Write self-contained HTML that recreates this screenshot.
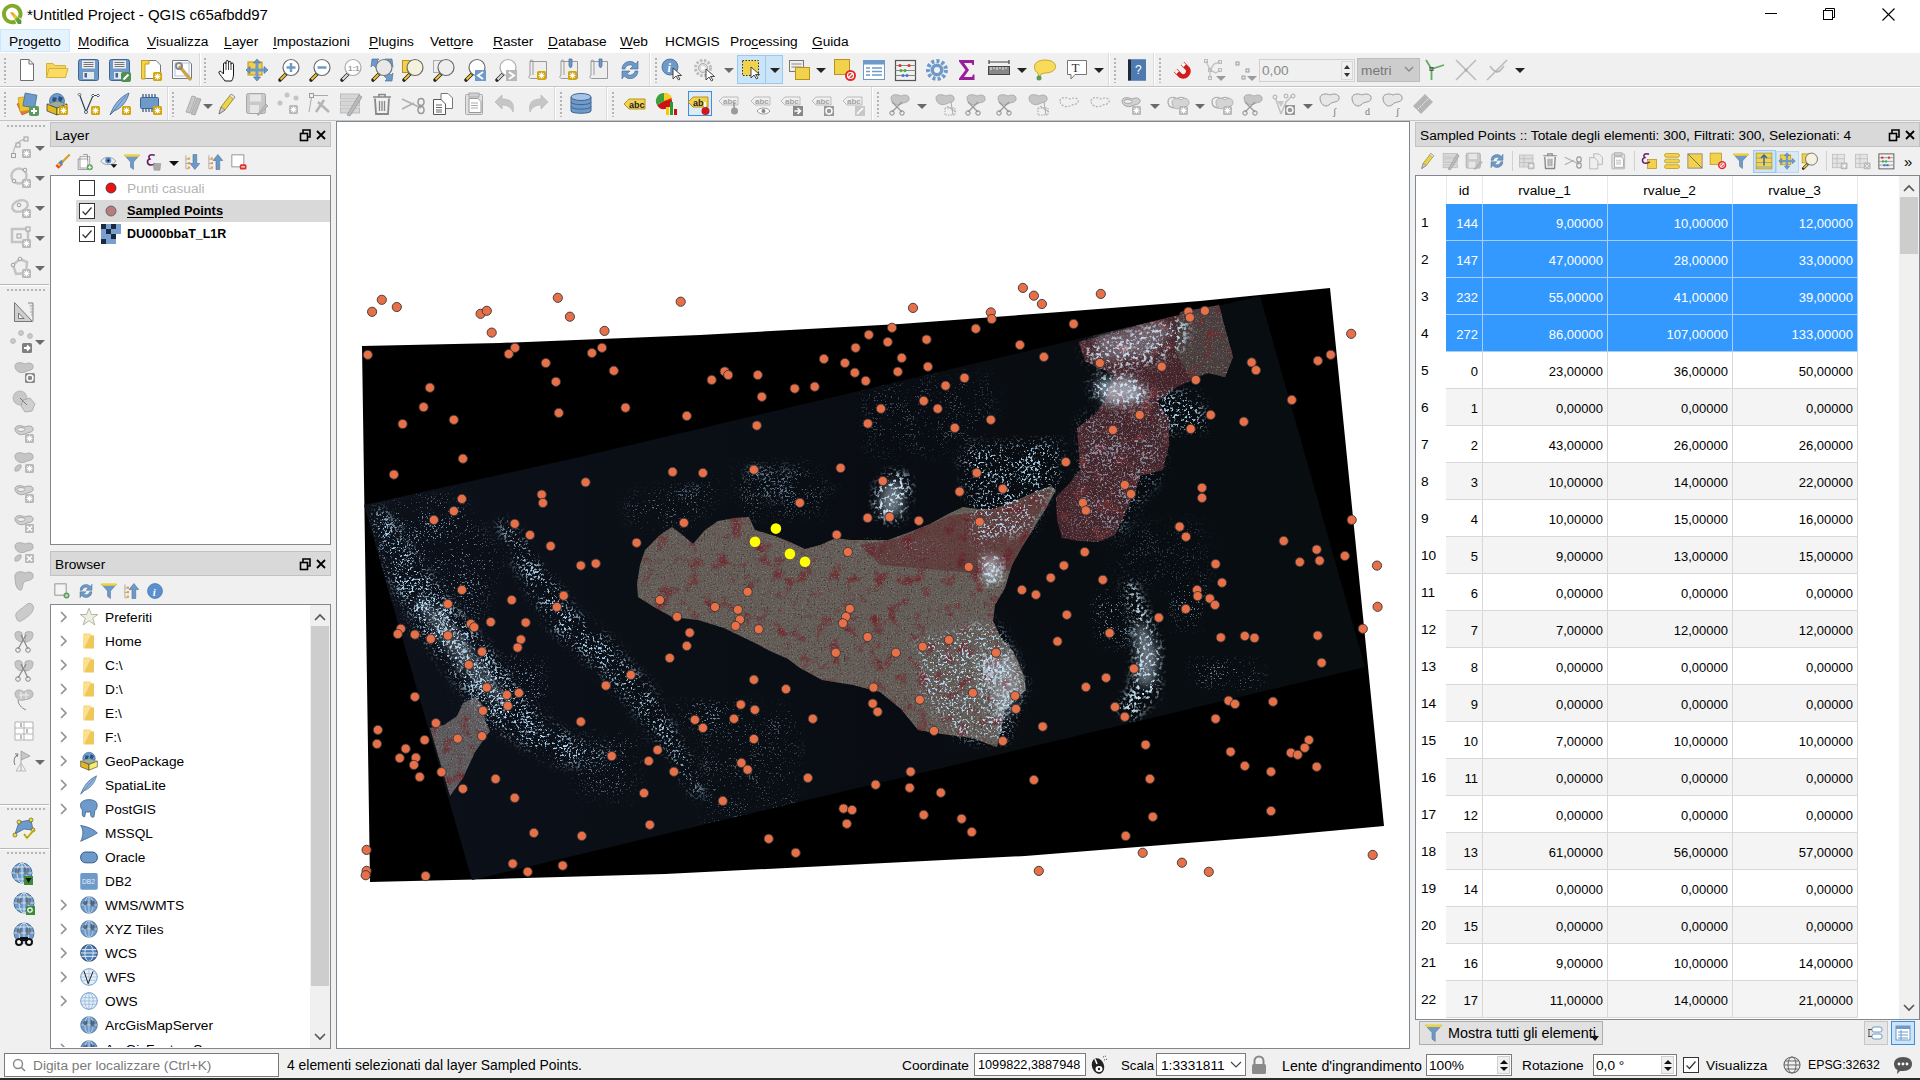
<!DOCTYPE html><html><head><meta charset="utf-8"><title>QGIS</title><style>
*{box-sizing:border-box;margin:0;padding:0}
html,body{width:1920px;height:1080px;overflow:hidden;background:#f0f0f0;font-family:"Liberation Sans", sans-serif;font-size:13.7px;color:#000;position:relative}
.a{position:absolute}
.t{position:absolute;white-space:pre;line-height:1}
u{text-decoration:underline;text-underline-offset:1.5px;text-decoration-thickness:1px}
svg{position:absolute;overflow:visible}
.hd{position:absolute;width:2px;background:repeating-linear-gradient(to bottom,#b4b4b4 0,#b4b4b4 2px,transparent 2px,transparent 4px)}
.hh{position:absolute;height:2px;background:repeating-linear-gradient(to right,#b4b4b4 0,#b4b4b4 2px,transparent 2px,transparent 4px)}
.dd{position:absolute;width:0;height:0;border-left:5px solid transparent;border-right:5px solid transparent;border-top:5px solid #222}
.ddg{position:absolute;width:0;height:0;border-left:5px solid transparent;border-right:5px solid transparent;border-top:5px solid #6a6a6a}
</style></head><body>
<div class="a" style="left:0;top:0;width:1920px;height:30px;background:#fff"></div>
<svg style="left:0px;top:1px" width="26" height="26" viewBox="0 0 26 26"><defs><linearGradient id="qg" x1="0" y1="0" x2="1" y2="1"><stop offset="0" stop-color="#f08a1c"/><stop offset="0.45" stop-color="#e8d03a"/><stop offset="0.6" stop-color="#6aa53a"/><stop offset="1" stop-color="#4f9235"/></linearGradient></defs><path d="M15.5 20.6A8.3 8.3 0 1 1 19.6 16.8" fill="none" stroke="#82a92a" stroke-width="3.9"/><path d="M10 11.5L13 11.2L21.5 19.6L21.2 23L18 23Z" fill="url(#qg)"/></svg>
<div class="t" style="left:27px;top:7px;font-size:15px">*Untitled Project - QGIS c65afbdd97</div>
<div class="a" style="left:1765px;top:13px;width:12px;height:1px;background:#000"></div>
<svg style="left:1823px;top:8px" width="14" height="14" viewBox="0 0 14 14"><rect x="0.5" y="2.5" width="9" height="9" fill="none" stroke="#000"/><path d="M2.5 2.5V0.5H11.5V9.5H9.5" fill="none" stroke="#000"/></svg>
<svg style="left:1882px;top:8px" width="13" height="13" viewBox="0 0 13 13"><path d="M0.5 0.5L12.5 12.5M12.5 0.5L0.5 12.5" stroke="#000" stroke-width="1.1"/></svg>
<div class="a" style="left:0;top:30px;width:1920px;height:23px;background:#fff"></div>
<div class="a" style="left:0;top:29px;width:70px;height:23px;background:#e5f3ff;border:1px solid #cce8ff"></div>
<div class="t" style="left:9px;top:34.5px;font-size:13.7px">P<u>r</u>ogetto</div>
<div class="t" style="left:78px;top:34.5px;font-size:13.7px"><u>M</u>odifica</div>
<div class="t" style="left:147px;top:34.5px;font-size:13.7px"><u>V</u>isualizza</div>
<div class="t" style="left:224px;top:34.5px;font-size:13.7px"><u>L</u>ayer</div>
<div class="t" style="left:273px;top:34.5px;font-size:13.7px"><u>I</u>mpostazioni</div>
<div class="t" style="left:369px;top:34.5px;font-size:13.7px"><u>P</u>lugins</div>
<div class="t" style="left:430px;top:34.5px;font-size:13.7px">Vett<u>o</u>re</div>
<div class="t" style="left:493px;top:34.5px;font-size:13.7px"><u>R</u>aster</div>
<div class="t" style="left:548px;top:34.5px;font-size:13.7px"><u>D</u>atabase</div>
<div class="t" style="left:620px;top:34.5px;font-size:13.7px"><u>W</u>eb</div>
<div class="t" style="left:665px;top:34.5px;font-size:13.7px">HCMGIS</div>
<div class="t" style="left:730px;top:34.5px;font-size:13.7px">Pro<u>c</u>essing</div>
<div class="t" style="left:812px;top:34.5px;font-size:13.7px"><u>G</u>uida</div>
<div class="a" style="left:0;top:52px;width:1920px;height:1px;background:#fff"></div>
<div class="a" style="left:0;top:53px;width:1920px;height:33px;background:#f0f0f0"></div>
<div class="a" style="left:0;top:86px;width:1920px;height:1px;background:#c4c4c4"></div>
<div class="a" style="left:0;top:87px;width:1920px;height:1px;background:#fff"></div>
<div class="a" style="left:0;top:120px;width:1920px;height:1px;background:#c4c4c4"></div>
<div class="hd" style="left:4px;top:58px;height:25px"></div>
<div class="hd" style="left:204px;top:58px;height:25px"></div>
<div class="hd" style="left:655px;top:58px;height:25px"></div>
<div class="hd" style="left:1114px;top:58px;height:25px"></div>
<div class="hd" style="left:1159px;top:58px;height:25px"></div>
<div class="hd" style="left:4px;top:92px;height:25px"></div>
<div class="hd" style="left:172px;top:92px;height:25px"></div>
<div class="hd" style="left:560px;top:92px;height:25px"></div>
<div class="hd" style="left:612px;top:92px;height:25px"></div>
<div class="hd" style="left:877px;top:92px;height:25px"></div>
<div class="a" style="left:199px;top:53px;width:1px;height:33px;background:#dadada"></div>
<div class="a" style="left:200px;top:53px;width:1px;height:33px;background:#fff"></div>
<div class="a" style="left:649px;top:53px;width:1px;height:33px;background:#dadada"></div>
<div class="a" style="left:650px;top:53px;width:1px;height:33px;background:#fff"></div>
<div class="a" style="left:1108px;top:53px;width:1px;height:33px;background:#dadada"></div>
<div class="a" style="left:1109px;top:53px;width:1px;height:33px;background:#fff"></div>
<div class="a" style="left:1153px;top:53px;width:1px;height:33px;background:#dadada"></div>
<div class="a" style="left:1154px;top:53px;width:1px;height:33px;background:#fff"></div>
<div class="a" style="left:167px;top:87px;width:1px;height:33px;background:#dadada"></div>
<div class="a" style="left:168px;top:87px;width:1px;height:33px;background:#fff"></div>
<div class="a" style="left:554px;top:87px;width:1px;height:33px;background:#dadada"></div>
<div class="a" style="left:555px;top:87px;width:1px;height:33px;background:#fff"></div>
<div class="a" style="left:606px;top:87px;width:1px;height:33px;background:#dadada"></div>
<div class="a" style="left:607px;top:87px;width:1px;height:33px;background:#fff"></div>
<div class="a" style="left:871px;top:87px;width:1px;height:33px;background:#dadada"></div>
<div class="a" style="left:872px;top:87px;width:1px;height:33px;background:#fff"></div>
<div class="a" style="left:737px;top:55px;width:46px;height:29px;background:#cce4f7;border:1px solid #99c9ef"></div>
<div class="a" style="left:765px;top:56px;width:1px;height:27px;background:#99c9ef"></div>
<svg style="left:15px;top:58px" width="24" height="24" viewBox="0 0 24 24"><path d="M5.5 1.5H14L18.5 6V22.5H5.5Z" fill="#fff" stroke="#6e6e6e"/><path d="M14 1.5V6H18.5" fill="none" stroke="#6e6e6e"/></svg>
<svg style="left:45px;top:58px" width="24" height="24" viewBox="0 0 24 24"><path d="M1.5 5.5H8L10 7.5H20.5V19.5H1.5Z" fill="#f6d35a" stroke="#d6b13a"/><path d="M4 10.5H23L20.5 19.5H1.5Z" fill="#fbdb62" stroke="#d6b13a"/></svg>
<svg style="left:77px;top:58px" width="24" height="24" viewBox="0 0 24 24"><rect x="1.5" y="1.5" width="20" height="21" rx="2" fill="#6d9ac9" stroke="#3f6693"/><rect x="5" y="2.5" width="13" height="8" fill="#eee"/><path d="M6.5 4.5H16.5M6.5 6.5H16.5M6.5 8.5H16.5" stroke="#555" stroke-width="0.8"/><rect x="6" y="14" width="11" height="7" fill="#e8e8e8"/><rect x="7.5" y="15" width="2.5" height="4.5" fill="#3f6693"/></svg>
<svg style="left:108px;top:58px" width="24" height="24" viewBox="0 0 24 24"><rect x="1.5" y="1.5" width="20" height="21" rx="2" fill="#6d9ac9" stroke="#3f6693"/><rect x="5" y="2.5" width="13" height="8" fill="#eee"/><path d="M6.5 4.5H16.5M6.5 6.5H16.5M6.5 8.5H16.5" stroke="#555" stroke-width="0.8"/><rect x="6" y="14" width="11" height="7" fill="#e8e8e8"/><rect x="7.5" y="15" width="2.5" height="4.5" fill="#3f6693"/><rect x="13" y="14" width="10" height="10" rx="2" fill="#4f8f52"/><path d="M15.5 21.5L20.5 16.5" stroke="#fff" stroke-width="2"/></svg>
<svg style="left:139px;top:58px" width="24" height="24" viewBox="0 0 24 24"><path d="M2.5 2.5H17L21.5 7V20.5H2.5Z" fill="#fff" stroke="#777"/><path d="M2.5 2.5H10V6H6V21H2.5Z" fill="#f3d250" stroke="#c49f18"/><rect x="14" y="14" width="9" height="9" rx="1.5" fill="#d4a60c"/><path d="M18.5 15.5V21.5M15.5 18.5H21.5M16.3 16.3L20.7 20.7M20.7 16.3L16.3 20.7" stroke="#fff" stroke-width="1.1"/></svg>
<svg style="left:170px;top:58px" width="24" height="24" viewBox="0 0 24 24"><path d="M2.5 2.5H18L21.5 6V20.5H2.5Z" fill="#fff" stroke="#777"/><rect x="5" y="5" width="14" height="13" fill="none" stroke="#aac0f0"/><path d="M10 9L20 21" stroke="#c9a54a" stroke-width="3.5" stroke-linecap="round"/><circle cx="9" cy="8" r="3" fill="none" stroke="#888" stroke-width="2"/></svg>
<svg style="left:215px;top:58px" width="24" height="24" viewBox="0 0 24 24"><g transform="translate(2 0)"><path d="M8 23C6 20 3 17 2 15C1.4 13.6 3 12.6 4.2 13.6L6.5 16V6C6.5 4.3 9 4.3 9 6V3.8C9 2 11.5 2 11.5 3.8V4.8C11.5 3 14 3 14 4.8V6.3C14 4.6 16.5 4.6 16.5 6.3V16C16.5 19.5 15.5 21.5 14.5 23Z" fill="#fff" stroke="#111" stroke-width="1"/><path d="M9 6V12M11.5 4.8V12M14 6.3V12" stroke="#111" stroke-width="0.8"/></g></svg>
<svg style="left:245px;top:58px" width="24" height="24" viewBox="0 0 24 24"><rect x="3" y="4" width="14" height="13" fill="#f2d24d" stroke="#b59418"/><path d="M12 1L15.5 5H8.5ZM12 23L15.5 19H8.5ZM1 12L5 8.5V15.5ZM23 12L19 8.5V15.5Z" fill="#6d9ac9" stroke="#3f6693" stroke-width="0.6"/><path d="M12 5V19M5 12H19" stroke="#6d9ac9" stroke-width="3"/></svg>
<svg style="left:277px;top:58px" width="24" height="24" viewBox="0 0 24 24"><path d="M3 22L9 16" stroke="#222" stroke-width="3.6" stroke-linecap="round"/><path d="M3.5 21.5L8.5 16.5" stroke="#e9c22e" stroke-width="2.2"/><circle cx="14" cy="9.5" r="8" fill="#fff" stroke="#6b6b6b" stroke-width="1.2"/><path d="M14 5V14M9.5 9.5H18.5" stroke="#6d9ac9" stroke-width="2.5"/></svg>
<svg style="left:308px;top:58px" width="24" height="24" viewBox="0 0 24 24"><path d="M3 22L9 16" stroke="#222" stroke-width="3.6" stroke-linecap="round"/><path d="M3.5 21.5L8.5 16.5" stroke="#e9c22e" stroke-width="2.2"/><circle cx="14" cy="9.5" r="8" fill="#fff" stroke="#6b6b6b" stroke-width="1.2"/><path d="M9.5 9.5H18.5" stroke="#6d9ac9" stroke-width="2.5"/></svg>
<svg style="left:339px;top:58px" width="24" height="24" viewBox="0 0 24 24"><path d="M3 22L9 16" stroke="#222" stroke-width="3.6" stroke-linecap="round"/><path d="M3.5 21.5L8.5 16.5" stroke="#ddd" stroke-width="2.2"/><circle cx="14" cy="9.5" r="8" fill="#fff" stroke="#aaa" stroke-width="1.2"/><text x="9" y="12.5" font-size="8" font-weight="bold" fill="#999" font-family="Liberation Sans">1:1</text></svg>
<svg style="left:370px;top:58px" width="24" height="24" viewBox="0 0 24 24"><path d="M2 1H9L7 3L10 6L6 10L3 7L1 9Z M22 1H15L17 3L14 6L18 10L21 7L23 9Z M22 23H15L17 21L14 18L18 14L21 17L23 15Z" fill="#6d9ac9" stroke="#3f6693" stroke-width="0.6"/><path d="M3 22L9 16" stroke="#222" stroke-width="3.6" stroke-linecap="round"/><path d="M3.5 21.5L8.5 16.5" stroke="#e9c22e" stroke-width="2.2"/><circle cx="14" cy="9.5" r="8" fill="#e8e8e8" stroke="#777" stroke-width="1.2"/></svg>
<svg style="left:401px;top:58px" width="24" height="24" viewBox="0 0 24 24"><rect x="1.5" y="2.5" width="10" height="12" fill="#f2d24d" stroke="#b59418"/><path d="M3 22L9 16" stroke="#222" stroke-width="3.6" stroke-linecap="round"/><path d="M3.5 21.5L8.5 16.5" stroke="#e9c22e" stroke-width="2.2"/><circle cx="14" cy="9.5" r="8" fill="#f4f1dd" stroke="#6b6b6b" stroke-width="1.2"/></svg>
<svg style="left:432px;top:58px" width="24" height="24" viewBox="0 0 24 24"><rect x="1.5" y="2.5" width="10" height="12" fill="#eee" stroke="#aaa"/><path d="M3 22L9 16" stroke="#222" stroke-width="3.6" stroke-linecap="round"/><path d="M3.5 21.5L8.5 16.5" stroke="#e9c22e" stroke-width="2.2"/><circle cx="14" cy="9.5" r="8" fill="#eee" stroke="#6b6b6b" stroke-width="1.2"/></svg>
<svg style="left:463px;top:58px" width="24" height="24" viewBox="0 0 24 24"><path d="M3 22L9 16" stroke="#222" stroke-width="3.6" stroke-linecap="round"/><path d="M3.5 21.5L8.5 16.5" stroke="#e9c22e" stroke-width="2.2"/><circle cx="14" cy="9.5" r="8" fill="#fff" stroke="#6b6b6b" stroke-width="1.2"/><rect x="12" y="12" width="11" height="11" fill="#6d9ac9"/><path d="M20 14L15 17.5L20 21" fill="none" stroke="#fff" stroke-width="2"/></svg>
<svg style="left:494px;top:58px" width="24" height="24" viewBox="0 0 24 24"><path d="M3 22L9 16" stroke="#222" stroke-width="3.6" stroke-linecap="round"/><path d="M3.5 21.5L8.5 16.5" stroke="#ddd" stroke-width="2.2"/><circle cx="14" cy="9.5" r="8" fill="#fff" stroke="#aaa" stroke-width="1.2"/><rect x="12" y="12" width="11" height="11" fill="#b8b8b8"/><path d="M15 14L20 17.5L15 21" fill="none" stroke="#fff" stroke-width="2"/></svg>
<svg style="left:526px;top:58px" width="24" height="24" viewBox="0 0 24 24"><path d="M4 3.5H20.5V20.5H4.5C2.5 20.5 2.5 17.5 4 17.5V3.5C4 1.5 7 1.5 7 3.5V17" fill="#eee" stroke="#999"/><rect x="11" y="13" width="9" height="9" rx="1.5" fill="#d4a60c"/><path d="M15.5 14.5V20.5M12.5 17.5H18.5M13.3 15.3L17.7 19.7M17.7 15.3L13.3 19.7" stroke="#fff" stroke-width="1.1"/></svg>
<svg style="left:557px;top:58px" width="24" height="24" viewBox="0 0 24 24"><path d="M4 3.5H20.5V20.5H4.5C2.5 20.5 2.5 17.5 4 17.5V3.5C4 1.5 7 1.5 7 3.5V17" fill="#eee" stroke="#999"/><path d="M12 1H15V8L13.5 10L12 8Z" fill="#6d9ac9" stroke="#3f6693" stroke-width="0.7"/><rect x="11" y="13" width="9" height="9" rx="1.5" fill="#d4a60c"/><path d="M15.5 14.5V20.5M12.5 17.5H18.5M13.3 15.3L17.7 19.7M17.7 15.3L13.3 19.7" stroke="#fff" stroke-width="1.1"/></svg>
<svg style="left:587px;top:58px" width="24" height="24" viewBox="0 0 24 24"><path d="M4 3.5H20.5V20.5H4.5C2.5 20.5 2.5 17.5 4 17.5V3.5C4 1.5 7 1.5 7 3.5V17" fill="#eee" stroke="#999"/><path d="M12 1H15V8L13.5 10L12 8Z" fill="#6d9ac9" stroke="#3f6693" stroke-width="0.7"/></svg>
<svg style="left:618px;top:58px" width="24" height="24" viewBox="0 0 24 24"><path d="M4 11A8 8 0 0 1 18 6L20 3V11H12L15 8A5 5 0 0 0 7 11Z" fill="#6d9ac9" stroke="#3f6693" stroke-width="0.6"/><path d="M20 13A8 8 0 0 1 6 18L4 21V13H12L9 16A5 5 0 0 0 17 13Z" fill="#6d9ac9" stroke="#3f6693" stroke-width="0.6"/></svg>
<svg style="left:661px;top:58px" width="24" height="24" viewBox="0 0 24 24"><circle cx="9" cy="9" r="8" fill="#6d9ac9" stroke="#3f6693" stroke-width="0.8"/><text x="6.5" y="14" font-size="12" font-style="italic" font-weight="bold" fill="#fff" font-family="Liberation Serif">i</text><path d="M12 10L12 21L15 18L17.5 22L19 21L16.5 17.5H20.5Z" fill="#fff" stroke="#333" stroke-width="0.9"/></svg>
<svg style="left:693px;top:58px" width="24" height="24" viewBox="0 0 24 24"><circle cx="10" cy="10" r="7.5" fill="none" stroke="#bdbdbd" stroke-width="3" stroke-dasharray="2.5 1.5"/><circle cx="10" cy="10" r="4.5" fill="#ddd" stroke="#aaa"/><path d="M8.5 7.5L13 10L8.5 12.5Z" fill="#fff"/><path d="M13 11L13 22L16 19L18.5 23L20 22L17.5 18.5H21.5Z" fill="#fff" stroke="#333" stroke-width="0.9"/></svg>
<svg style="left:740px;top:58px" width="24" height="24" viewBox="0 0 24 24"><rect x="2.5" y="2.5" width="16" height="15" fill="#f2d24d" stroke="#333" stroke-dasharray="1.5 1.5"/><path d="M11 9L11 20L14 17L16.5 21L18 20L15.5 16.5H19.5Z" fill="#fff" stroke="#333" stroke-width="0.9"/></svg>
<svg style="left:788px;top:58px" width="24" height="24" viewBox="0 0 24 24"><rect x="1.5" y="2.5" width="14" height="11" fill="#eee" stroke="#777"/><path d="M3.5 6H13.5M3.5 9H13.5" stroke="#888"/><rect x="7.5" y="9.5" width="14" height="12" fill="#f2d24d" stroke="#b59418"/></svg>
<svg style="left:833px;top:58px" width="24" height="24" viewBox="0 0 24 24"><rect x="1.5" y="1.5" width="15" height="15" fill="#f2d24d" stroke="#b59418"/><circle cx="17.5" cy="17.5" r="5.5" fill="#e02a2a"/><path d="M15 20L20 15" stroke="#fff" stroke-width="1.5"/><circle cx="17.5" cy="17.5" r="3" fill="none" stroke="#fff" stroke-width="1.2"/></svg>
<svg style="left:862px;top:58px" width="24" height="24" viewBox="0 0 24 24"><rect x="1.5" y="2.5" width="21" height="19" fill="#fff" stroke="#6d9ac9"/><rect x="1.5" y="2.5" width="21" height="4" fill="#6d9ac9"/><path d="M4 10H8M10 10H20M4 13.5H8M10 13.5H20M4 17H8M10 17H20" stroke="#6d9ac9" stroke-width="1.5"/></svg>
<svg style="left:893px;top:58px" width="24" height="24" viewBox="0 0 24 24"><rect x="2.5" y="2.5" width="20" height="20" fill="none" stroke="#555" stroke-width="1.2"/><path d="M2.5 7.5H22.5M2.5 12.5H22.5M2.5 17.5H22.5" stroke="#888"/><circle cx="7" cy="7.5" r="1.6" fill="#d33"/><circle cx="16" cy="7.5" r="1.6" fill="#d33"/><circle cx="8" cy="12.5" r="1.6" fill="#4a4"/><circle cx="12" cy="12.5" r="1.6" fill="#4a4"/><circle cx="10" cy="17.5" r="1.6" fill="#47c"/><circle cx="14" cy="17.5" r="1.6" fill="#47c"/></svg>
<svg style="left:925px;top:58px" width="24" height="24" viewBox="0 0 24 24"><circle cx="12" cy="12" r="9" fill="none" stroke="#6d9ac9" stroke-width="4" stroke-dasharray="3 2.2"/><circle cx="12" cy="12" r="6.5" fill="#6d9ac9"/><circle cx="12" cy="12" r="3" fill="#f0f0f0"/></svg>
<svg style="left:955px;top:58px" width="24" height="24" viewBox="0 0 24 24"><path d="M4 2H19V7H17.5L16.5 5H9L14 12L9 19H17L18 16.5H19.5V22H4V20.5L10.5 12L4 3.5Z" fill="#9a1e9a"/></svg>
<svg style="left:987px;top:58px" width="24" height="24" viewBox="0 0 24 24"><rect x="1.5" y="8.5" width="21" height="8" fill="#888" stroke="#444"/><path d="M4 9V12M7 9V11M10 9V12M13 9V11M16 9V12M19 9V11" stroke="#eee"/><path d="M2 4H22M2 2V6M22 2V6" stroke="#444" stroke-width="1.2"/></svg>
<svg style="left:1033px;top:58px" width="24" height="24" viewBox="0 0 24 24"><path d="M12 2C18 2 22.5 4.5 22.5 8.5C22.5 12.5 18 15 12 15L8 16L6 21L5 15C2.5 14 1.5 11.5 1.5 8.5C1.5 4.5 6 2 12 2Z" fill="#f7dc5c" stroke="#c8a828"/><circle cx="6" cy="20" r="2.5" fill="#5a9a5a"/></svg>
<svg style="left:1065px;top:58px" width="24" height="24" viewBox="0 0 24 24"><path d="M2.5 2.5H21.5V16.5H10L6 21V16.5H2.5Z" fill="#fff" stroke="#777"/><text x="6.5" y="14" font-size="13" font-family="Liberation Serif" fill="#333">T</text></svg>
<svg style="left:1125px;top:58px" width="24" height="24" viewBox="0 0 24 24"><rect x="3" y="1.5" width="18" height="21" fill="#3f6693"/><rect x="6" y="1.5" width="15" height="21" fill="#4e7ab0"/><rect x="3" y="1.5" width="3" height="21" fill="#1e2a3a"/><text x="10" y="16" font-size="12" fill="#fff" font-family="Liberation Sans">?</text></svg>
<svg style="left:1170px;top:58px" width="24" height="24" viewBox="0 0 24 24"><path d="M12.6 5.6L17.8 10.8A5.2 5.2 0 0 1 10.8 17.8L5.6 12.6" fill="none" stroke="#d41c1c" stroke-width="4.6"/><path d="M12.6 5.6L14.7 7.7M5.6 12.6L7.7 14.7" stroke="#fff" stroke-width="3.4"/><path d="M11 4L16.2 9.2M14.2 2L19.4 7.2" stroke="#8a1010" stroke-width="0" /></svg>
<svg style="left:1202px;top:58px" width="24" height="24" viewBox="0 0 24 24"><path d="M4 3L8 12L8 20M8 12L12 6M8 12L14 15M12 6L18 4M14 15L18 12" stroke="#c4c4c4" stroke-width="1.4" fill="none"/><rect x="2.5" y="1.5" width="3" height="3" fill="none" stroke="#bbb"/><rect x="16.5" y="2.5" width="3" height="3" fill="none" stroke="#bbb"/><rect x="16.5" y="10.5" width="3" height="3" fill="none" stroke="#bbb"/><rect x="6.5" y="10.5" width="3" height="3" fill="none" stroke="#bbb"/><rect x="6.5" y="18.5" width="3" height="3" fill="none" stroke="#bbb"/></svg>
<svg style="left:1233px;top:58px" width="24" height="24" viewBox="0 0 24 24"><rect x="3" y="4" width="3" height="3" fill="none" stroke="#999"/><rect x="13" y="11" width="3" height="3" fill="none" stroke="#999"/><rect x="9" y="18" width="3" height="3" fill="none" stroke="#999"/></svg>
<svg style="left:1422px;top:58px" width="24" height="24" viewBox="0 0 24 24"><path d="M4 2L9.5 11V22M9.5 11L22 7" stroke="#5fae5f" stroke-width="1.8" fill="none"/><rect x="8" y="9.5" width="3" height="3" fill="none" stroke="#555"/></svg>
<svg style="left:1454px;top:58px" width="24" height="24" viewBox="0 0 24 24"><path d="M2 2L22 22M22 2L2 22" stroke="#bcbcbc" stroke-width="1.6"/><circle cx="12" cy="12" r="1.5" fill="#aaa"/></svg>
<svg style="left:1485px;top:58px" width="24" height="24" viewBox="0 0 24 24"><path d="M2 22L22 2" stroke="#bcbcbc" stroke-width="1.6"/><path d="M5 10L12 13L19 10L12 15Z" fill="#b0b0b0"/><path d="M5 8L10 14M19 8L14 14" stroke="#bcbcbc" stroke-width="1.6"/></svg>
<div class="dd" style="left:770px;top:68px"></div>
<div class="dd" style="left:816px;top:68px"></div>
<div class="dd" style="left:1017px;top:68px"></div>
<div class="dd" style="left:1094px;top:68px"></div>
<div class="dd" style="left:1515px;top:68px"></div>
<div class="ddg" style="left:724px;top:68px"></div>
<div class="ddg" style="left:1216px;top:76px;border-top-color:#9a9a9a"></div>
<div class="ddg" style="left:1247px;top:76px;border-top-color:#9a9a9a"></div>
<div class="a" style="left:1259px;top:59px;width:96px;height:23px;background:#f0f0f0;border:1px solid #d0d0d0"></div>
<div class="t" style="left:1262px;top:64px;color:#8a8a8a;font-size:13.7px">0,00</div>
<div class="a" style="left:1341px;top:61px;width:12px;height:19px;border:1px solid #d8d8d8;background:#f0f0f0"></div>
<svg style="left:1342px;top:62px" width="10" height="18" viewBox="0 0 10 18"><path d="M2 7L5 3L8 7Z M2 11L5 15L8 11Z" fill="#333"/></svg>
<div class="a" style="left:1357px;top:58px;width:63px;height:24px;background:#cdcdcd;border:1px solid #bcbcbc"></div>
<div class="t" style="left:1361px;top:64px;color:#777;font-size:13.7px">metri</div>
<svg style="left:1404px;top:66px" width="10" height="8" viewBox="0 0 10 8"><path d="M1 1L5 5L9 1" fill="none" stroke="#888" stroke-width="1.3"/></svg>
<div class="a" style="left:688px;top:91px;width:24px;height:25px;background:#dfeaf7;border:1px solid #3a8ee6"></div>
<svg style="left:15px;top:92px" width="24" height="24" viewBox="0 0 24 24"><path d="M2 12L9 8L14 20L7 23Z" fill="#e07a3a" stroke="#b05020" stroke-width="0.6"/><rect x="4" y="5" width="11" height="14" fill="#f2c42c" stroke="#c09010" stroke-width="0.6" transform="rotate(-8 9 12)"/><rect x="9" y="2" width="12" height="13" fill="#6d9ac9" stroke="#3f6693" stroke-width="0.7" transform="rotate(10 15 8)"/><rect x="14" y="14" width="10" height="10" rx="2" fill="#5a9a5a"/><path d="M19 16V22M16 19H22" stroke="#fff" stroke-width="2"/></svg>
<svg style="left:45px;top:92px" width="24" height="24" viewBox="0 0 24 24"><circle cx="12" cy="9" r="7.5" fill="#6d9ac9" stroke="#3f6693" stroke-width="0.7"/><path d="M8 5L12 6L10 10L7 9Z M14 4L18 6L16 10L13 8Z" fill="#2d4f78"/><path d="M2 12L12 16V23L2 19Z" fill="#e2b81e" stroke="#333" stroke-width="0.7"/><path d="M12 16L22 12V19L12 23Z" fill="#f8ec70" stroke="#333" stroke-width="0.7"/><path d="M2 12L12 9L22 12L12 16Z" fill="#f3d84a" stroke="#333" stroke-width="0.7" opacity="0.35"/><rect x="14" y="14" width="9" height="9" rx="1.5" fill="#d4a60c"/><path d="M18.5 15.5V21.5M15.5 18.5H21.5M16.3 16.3L20.7 20.7M20.7 16.3L16.3 20.7" stroke="#fff" stroke-width="1.1"/></svg>
<svg style="left:77px;top:92px" width="24" height="24" viewBox="0 0 24 24"><path d="M2.5 2.5L9 20L16 3.5L21 3.5" fill="none" stroke="#2d3f55" stroke-width="1.2"/><path d="M1 2.5L2.5 1L4 2.5L2.5 4Z M14.5 3.5L16 2L17.5 3.5L16 5Z M19.5 3.5L21 2L22.5 3.5L21 5Z" fill="#fff" stroke="#2d3f55" stroke-width="0.8"/><circle cx="9" cy="20" r="1.5" fill="#fff" stroke="#2d3f55" stroke-width="0.8"/><rect x="14" y="14" width="9" height="9" rx="1.5" fill="#d4a60c"/><path d="M18.5 15.5V21.5M15.5 18.5H21.5M16.3 16.3L20.7 20.7M20.7 16.3L16.3 20.7" stroke="#fff" stroke-width="1.1"/></svg>
<svg style="left:108px;top:92px" width="24" height="24" viewBox="0 0 24 24"><path d="M2 23C5 15 10 6 21 1C19 9 14 16 6 19Z" fill="#8fb3dc" stroke="#3f6693" stroke-width="0.8"/><path d="M3 22L18 4" stroke="#3f6693" stroke-width="0.6"/><rect x="14" y="14" width="9" height="9" rx="1.5" fill="#d4a60c"/><path d="M18.5 15.5V21.5M15.5 18.5H21.5M16.3 16.3L20.7 20.7M20.7 16.3L16.3 20.7" stroke="#fff" stroke-width="1.1"/></svg>
<svg style="left:139px;top:92px" width="24" height="24" viewBox="0 0 24 24"><rect x="1.5" y="5.5" width="18" height="11" rx="1" fill="#6d9ac9" stroke="#3f6693"/><path d="M4 2V5M7 2V5M10 2V5M13 2V5M16 2V5M4 17V20M7 17V20M10 17V20M13 17V20M16 17V20" stroke="#2d4f78" stroke-width="1.2"/><rect x="14" y="14" width="9" height="9" rx="1.5" fill="#d4a60c"/><path d="M18.5 15.5V21.5M15.5 18.5H21.5M16.3 16.3L20.7 20.7M20.7 16.3L16.3 20.7" stroke="#fff" stroke-width="1.1"/></svg>
<svg style="left:184px;top:92px" width="24" height="24" viewBox="0 0 24 24"><path d="M2 20L8 4L12 5L6 21Z" fill="#c8c8c8" stroke="#999" stroke-width="0.7"/><path d="M7 22L13 6L17 7L11 23Z" fill="#bdbdbd" stroke="#999" stroke-width="0.7"/></svg>
<svg style="left:214px;top:92px" width="24" height="24" viewBox="0 0 24 24"><path d="M5 22L7 15L17 2L21 5L11 18Z" fill="#e9d44a" stroke="#8a7a1a" stroke-width="0.8"/><path d="M5 22L7 15L11 18Z" fill="#ccc" stroke="#666" stroke-width="0.6"/><path d="M17 2L21 5L19.5 7L15.5 4Z" fill="#e8e8e8" stroke="#888" stroke-width="0.6"/></svg>
<svg style="left:245px;top:92px" width="24" height="24" viewBox="0 0 24 24"><rect x="1.5" y="1.5" width="19" height="20" rx="2" fill="#c9c9c9" stroke="#a8a8a8"/><rect x="5" y="2.5" width="11" height="7" fill="#e6e6e6"/><rect x="5" y="13" width="9" height="8" fill="#e6e6e6"/><path d="M12 23L21 12L23 14L14 23Z" fill="#bbb" stroke="#999" stroke-width="0.6"/></svg>
<svg style="left:277px;top:92px" width="24" height="24" viewBox="0 0 24 24"><circle cx="10" cy="3" r="2.5" fill="#c4c4c4"/><circle cx="19" cy="6" r="2.5" fill="#c4c4c4"/><circle cx="3" cy="11" r="2.5" fill="#c4c4c4"/><rect x="12" y="13" width="9" height="9" rx="1.5" fill="#b9b9b9"/><path d="M16.5 14.5V20.5M13.5 17.5H19.5M14.3 15.3L18.7 19.7M18.7 15.3L14.3 19.7" stroke="#fff" stroke-width="1.1"/></svg>
<svg style="left:308px;top:92px" width="24" height="24" viewBox="0 0 24 24"><rect x="1.5" y="1.5" width="4" height="4" fill="none" stroke="#999"/><path d="M5.5 3.5H20M3.5 5.5L1 20" stroke="#aaa"/><path d="M8 20L16 8M10 10L21 20" stroke="#b5b5b5" stroke-width="2.5"/></svg>
<svg style="left:339px;top:92px" width="24" height="24" viewBox="0 0 24 24"><rect x="1.5" y="2" width="19" height="5" fill="#d6d6d6" stroke="#bbb"/><rect x="1.5" y="9" width="19" height="5" fill="#d6d6d6" stroke="#bbb"/><rect x="1.5" y="16" width="19" height="5" fill="#d6d6d6" stroke="#bbb"/><path d="M8 23L20 3L23 5L11 24Z" fill="#bbb" stroke="#888" stroke-width="0.6"/></svg>
<svg style="left:370px;top:92px" width="24" height="24" viewBox="0 0 24 24"><path d="M3 5H21M9 5V2.5H15V5" stroke="#888" stroke-width="1.6" fill="none"/><path d="M5 6.5L6 22H18L19 6.5" fill="none" stroke="#888" stroke-width="1.8"/><path d="M9.5 9V19M12 9V19M14.5 9V19" stroke="#888" stroke-width="1.3"/></svg>
<svg style="left:401px;top:92px" width="24" height="24" viewBox="0 0 24 24"><path d="M1 7L20 16M1 17L13 11" stroke="#b0b0b0" stroke-width="1.6"/><ellipse cx="20" cy="10" rx="3" ry="3.5" fill="none" stroke="#999" stroke-width="1.5"/><ellipse cx="20" cy="18" rx="3" ry="3.5" fill="none" stroke="#999" stroke-width="1.5"/></svg>
<svg style="left:431px;top:92px" width="24" height="24" viewBox="0 0 24 24"><path d="M10 1.5H17L21.5 6V16.5H10Z" fill="#fff" stroke="#777"/><path d="M2.5 7.5H10L14.5 12V22.5H2.5Z" fill="#fff" stroke="#555"/><path d="M5 13H11M5 15.5H11M5 18H11M5 20H11" stroke="#666"/></svg>
<svg style="left:463px;top:92px" width="24" height="24" viewBox="0 0 24 24"><rect x="2.5" y="2.5" width="17" height="20" rx="1" fill="#e0e0e0" stroke="#aaa"/><rect x="6" y="1" width="10" height="4" fill="#d0d0d0" stroke="#aaa"/><path d="M6 6.5H15L18 9.5V20.5H6Z" fill="#fff" stroke="#999"/><path d="M8 11H15M8 13.5H15M8 16H15" stroke="#aaa"/></svg>
<svg style="left:494px;top:92px" width="24" height="24" viewBox="0 0 24 24"><path d="M1 10L8 3V7C16 7 21 10 19 20C17 15 13 13 8 13V17Z" fill="#c6c6c6" stroke="#b0b0b0" stroke-width="0.6"/></svg>
<svg style="left:525px;top:92px" width="24" height="24" viewBox="0 0 24 24"><path d="M23 10L16 3V7C8 7 3 10 5 20C7 15 11 13 16 13V17Z" fill="#c6c6c6" stroke="#b0b0b0" stroke-width="0.6"/></svg>
<svg style="left:569px;top:92px" width="24" height="24" viewBox="0 0 24 24"><path d="M2 5V19C2 22 22 22 22 19V5" fill="#6d9ac9" stroke="#3f6693"/><ellipse cx="12" cy="5" rx="10" ry="3.5" fill="#a8c4e4" stroke="#3f6693"/><path d="M2 10C2 13.5 22 13.5 22 10M2 14.5C2 18 22 18 22 14.5" fill="none" stroke="#3f6693"/></svg>
<svg style="left:623px;top:92px" width="24" height="24" viewBox="0 0 24 24"><path d="M1 12L6 7H22V17H6Z" fill="#f3d250" stroke="#b59418"/><text x="6" y="15.5" font-size="9" font-weight="bold" fill="#222" font-family="Liberation Sans">abc</text></svg>
<svg style="left:655px;top:92px" width="24" height="24" viewBox="0 0 24 24"><path d="M9 9L9 1A8 8 0 0 1 17 9Z" fill="#d42020"/><path d="M9 9L17 9A8 8 0 0 1 2 13Z" fill="#c81414"/><path d="M9 9L2 13A8 8 0 0 1 9 1Z" fill="#3aa03a"/><path d="M9 1A8 8 0 0 1 17 6L9 9Z" fill="#f3d020"/><rect x="11" y="15" width="3" height="8" fill="#f5c800"/><rect x="15" y="10" width="3" height="13" fill="#2a9a2a"/><rect x="19" y="17" width="3" height="6" fill="#c81414"/></svg>
<svg style="left:687px;top:92px" width="24" height="24" viewBox="0 0 24 24"><path d="M1 10L6 5H21V15H6Z" fill="#f3d250" stroke="#b59418"/><text x="6" y="13.5" font-size="9" font-weight="bold" fill="#222" font-family="Liberation Sans">ab</text><path d="M18 10V17" stroke="#fff" stroke-width="2"/><circle cx="18.5" cy="19" r="4" fill="#c81c1c"/></svg>
<svg style="left:718px;top:92px" width="24" height="24" viewBox="0 0 24 24"><path d="M1 9L5 5H20V13H5Z" fill="none" stroke="#bbb"/><text x="5" y="11.5" font-size="8" font-weight="bold" fill="#a0a0a0" font-family="Liberation Sans">abc</text><path d="M16 10V16" stroke="#999" stroke-width="1.5"/><circle cx="16.5" cy="19" r="3.5" fill="#9a9a9a"/></svg>
<svg style="left:750px;top:92px" width="24" height="24" viewBox="0 0 24 24"><path d="M1 9L5 5H20V13H5Z" fill="none" stroke="#bbb"/><text x="5" y="11.5" font-size="8" font-weight="bold" fill="#a0a0a0" font-family="Liberation Sans">abc</text><path d="M7 19C10 15 17 15 20 19C17 23 10 23 7 19Z" fill="#fff" stroke="#999"/><circle cx="13.5" cy="19" r="2" fill="#888"/></svg>
<svg style="left:780px;top:92px" width="24" height="24" viewBox="0 0 24 24"><path d="M1 9L5 5H20V13H5Z" fill="none" stroke="#bbb"/><text x="5" y="11.5" font-size="8" font-weight="bold" fill="#a0a0a0" font-family="Liberation Sans">abc</text><rect x="13" y="14" width="10" height="10" fill="#888"/><path d="M14.5 19H20M17.5 16L20.5 19L17.5 22" stroke="#fff" stroke-width="1.6" fill="none"/></svg>
<svg style="left:811px;top:92px" width="24" height="24" viewBox="0 0 24 24"><path d="M1 9L5 5H20V13H5Z" fill="none" stroke="#bbb"/><text x="5" y="11.5" font-size="8" font-weight="bold" fill="#a0a0a0" font-family="Liberation Sans">abc</text><rect x="13" y="14" width="10" height="10" fill="#999"/><circle cx="18" cy="19" r="3" fill="none" stroke="#fff" stroke-width="1.4"/></svg>
<svg style="left:842px;top:92px" width="24" height="24" viewBox="0 0 24 24"><path d="M1 9L5 5H20V13H5Z" fill="none" stroke="#bbb"/><text x="5" y="11.5" font-size="8" font-weight="bold" fill="#a0a0a0" font-family="Liberation Sans">abc</text><rect x="13" y="14" width="10" height="10" fill="#c8c8c8"/><path d="M15 22L21 16" stroke="#fff" stroke-width="1.6"/></svg>
<svg style="left:888px;top:92px" width="24" height="24" viewBox="0 0 24 24"><path d="M3 6C3 2 9 2 13 4C17 2 22 3 21 8C20 11 16 10 13 12C8 14 3 11 3 6Z" fill="#c5c5c5" stroke="#a5a5a5" stroke-width="0.8"/><path d="M4 20L14 10M14 20L4 10" stroke="#999" stroke-width="1.3"/><circle cx="4" cy="21" r="2.2" fill="none" stroke="#888"/><circle cx="14" cy="21" r="2.2" fill="none" stroke="#888"/></svg>
<svg style="left:933px;top:92px" width="24" height="24" viewBox="0 0 24 24"><path d="M3 6C3 2 9 2 13 4C17 2 22 3 21 8C20 11 16 10 13 12C8 14 3 11 3 6Z" fill="#c5c5c5" stroke="#a5a5a5" stroke-width="0.8"/><path d="M14 14L23 20M18 10L20 23" stroke="#aaa"/><rect x="12" y="16" width="10" height="7" fill="none" stroke="#aaa" stroke-dasharray="1.5 1"/></svg>
<svg style="left:964px;top:92px" width="24" height="24" viewBox="0 0 24 24"><path d="M3 6C3 2 9 2 13 4C17 2 22 3 21 8C20 11 16 10 13 12C8 14 3 11 3 6Z" fill="#c5c5c5" stroke="#a5a5a5" stroke-width="0.8"/><path d="M4 20L14 10M14 20L4 10" stroke="#999" stroke-width="1.3"/><circle cx="4" cy="21" r="2.2" fill="none" stroke="#888"/><circle cx="14" cy="21" r="2.2" fill="none" stroke="#888"/></svg>
<svg style="left:995px;top:92px" width="24" height="24" viewBox="0 0 24 24"><path d="M3 6C3 2 9 2 13 4C17 2 22 3 21 8C20 11 16 10 13 12C8 14 3 11 3 6Z" fill="#c5c5c5" stroke="#a5a5a5" stroke-width="0.8"/><path d="M4 20L14 10M14 20L4 10" stroke="#999" stroke-width="1.3"/><circle cx="4" cy="21" r="2.2" fill="none" stroke="#888"/><circle cx="14" cy="21" r="2.2" fill="none" stroke="#888"/></svg>
<svg style="left:1026px;top:92px" width="24" height="24" viewBox="0 0 24 24"><path d="M3 6C3 2 9 2 13 4C17 2 22 3 21 8C20 11 16 10 13 12C8 14 3 11 3 6Z" fill="#c5c5c5" stroke="#a5a5a5" stroke-width="0.8"/><path d="M14 14L23 20M18 10L20 23" stroke="#aaa"/><rect x="12" y="16" width="10" height="7" fill="none" stroke="#aaa" stroke-dasharray="1.5 1"/></svg>
<svg style="left:1057px;top:92px" width="24" height="24" viewBox="0 0 24 24"><path d="M3 9C3 5 9 5 13 7C17 5 22 6 21 10C20 13 16 12 13 14C8 16 3 13 3 9Z" fill="none" stroke="#b0b0b0" stroke-width="1.2" stroke-dasharray="2 1.5"/></svg>
<svg style="left:1088px;top:92px" width="24" height="24" viewBox="0 0 24 24"><path d="M3 9C3 5 9 5 13 7C17 5 22 6 21 10C20 13 16 12 13 14C8 16 3 13 3 9Z" fill="none" stroke="#b0b0b0" stroke-width="1.2" stroke-dasharray="2 1.5"/></svg>
<svg style="left:1119px;top:92px" width="24" height="24" viewBox="0 0 24 24"><path d="M3 9C3 5 9 5 13 7C17 5 22 6 21 10C20 13 16 12 13 14C8 16 3 13 3 9Z" fill="#d0d0d0" stroke="#a5a5a5"/><ellipse cx="9" cy="9.5" rx="4" ry="2" fill="#eee" stroke="#aaa"/><rect x="13" y="14" width="9" height="9" rx="1.5" fill="#b9b9b9"/><path d="M17.5 15.5V21.5M14.5 18.5H20.5M15.3 16.3L19.7 20.7M19.7 16.3L15.3 20.7" stroke="#fff" stroke-width="1.1"/></svg>
<svg style="left:1166px;top:92px" width="24" height="24" viewBox="0 0 24 24"><path d="M2 10C2 5 8 4 11 7C14 4 20 5 20 10C20 14 14 13 11 15C7 17 2 15 2 10Z" fill="none" stroke="#aaa" stroke-width="1.2"/><path d="M6 10C6 6 12 5 15 8C18 5 23 6 23 11C23 15 17 14 14 16C10 18 6 16 6 10Z" fill="#d4d4d4" stroke="#aaa" stroke-width="0.8"/><rect x="13" y="14" width="9" height="9" rx="1.5" fill="#b9b9b9"/><path d="M17.5 15.5V21.5M14.5 18.5H20.5M15.3 16.3L19.7 20.7M19.7 16.3L15.3 20.7" stroke="#fff" stroke-width="1.1"/></svg>
<svg style="left:1210px;top:92px" width="24" height="24" viewBox="0 0 24 24"><path d="M2 10C2 5 8 4 11 7C14 4 20 5 20 10C20 14 14 13 11 15C7 17 2 15 2 10Z" fill="none" stroke="#aaa" stroke-width="1.2"/><path d="M6 10C6 6 12 5 15 8C18 5 23 6 23 11C23 15 17 14 14 16C10 18 6 16 6 10Z" fill="#d4d4d4" stroke="#aaa" stroke-width="0.8"/><rect x="13" y="14" width="9" height="9" rx="1.5" fill="#b9b9b9"/><path d="M17.5 15.5V21.5M14.5 18.5H20.5M15.3 16.3L19.7 20.7M19.7 16.3L15.3 20.7" stroke="#fff" stroke-width="1.1"/></svg>
<svg style="left:1241px;top:92px" width="24" height="24" viewBox="0 0 24 24"><path d="M3 6C3 2 9 2 13 4C17 2 22 3 21 8C20 11 16 10 13 12C8 14 3 11 3 6Z" fill="#c5c5c5" stroke="#a5a5a5" stroke-width="0.8"/><path d="M4 20L14 10M14 20L4 10" stroke="#999" stroke-width="1.3"/><circle cx="4" cy="21" r="2.2" fill="none" stroke="#888"/><circle cx="14" cy="21" r="2.2" fill="none" stroke="#888"/></svg>
<svg style="left:1272px;top:92px" width="24" height="24" viewBox="0 0 24 24"><path d="M3 5L9 22M9 22L14 10L20 4" fill="none" stroke="#c0c0c0" stroke-width="1.5"/><circle cx="3" cy="5" r="2" fill="#eee" stroke="#aaa"/><circle cx="14" cy="4" r="2" fill="#eee" stroke="#aaa"/><circle cx="21" cy="4" r="2" fill="#eee" stroke="#aaa"/><path d="M5 9L9 15L12 9Z" fill="#c8c8c8"/><rect x="13" y="13" width="10" height="10" fill="#9a9a9a"/><circle cx="18" cy="18" r="3" fill="none" stroke="#fff" stroke-width="1.3"/></svg>
<svg style="left:1318px;top:92px" width="24" height="24" viewBox="0 0 24 24"><path d="M2 6C2 2 8 1 12 3C16 1 22 2 21 7C20 11 14 9 11 13C7 16 2 12 2 6Z" fill="#e6e6e6" stroke="#999" stroke-width="1"/><text x="15" y="23" font-size="10" fill="#777" font-family="Liberation Serif">ʃ</text></svg>
<svg style="left:1350px;top:92px" width="24" height="24" viewBox="0 0 24 24"><path d="M2 6C2 2 8 1 12 3C16 1 22 2 21 7C20 11 14 9 11 13C7 16 2 12 2 6Z" fill="#e6e6e6" stroke="#999" stroke-width="1"/><text x="15" y="23" font-size="10" fill="#777" font-family="Liberation Serif">d</text></svg>
<svg style="left:1381px;top:92px" width="24" height="24" viewBox="0 0 24 24"><path d="M2 6C2 2 8 1 12 3C16 1 22 2 21 7C20 11 14 9 11 13C7 16 2 12 2 6Z" fill="#e6e6e6" stroke="#999" stroke-width="1"/><text x="15" y="23" font-size="10" fill="#777" font-family="Liberation Serif">ʃ</text></svg>
<svg style="left:1411px;top:92px" width="24" height="24" viewBox="0 0 24 24"><path d="M2 14L14 2L22 10L10 22Z" fill="#b5b5b5"/><path d="M5 19L19 5" stroke="#fff" stroke-dasharray="1.5 1.5"/></svg>
<div class="ddg" style="left:203px;top:104px"></div>
<div class="ddg" style="left:917px;top:104px"></div>
<div class="ddg" style="left:1150px;top:104px"></div>
<div class="ddg" style="left:1195px;top:104px"></div>
<div class="ddg" style="left:1303px;top:104px"></div>
<div class="hh" style="left:7px;top:125px;width:38px"></div>
<div class="a" style="left:0;top:284px;width:49px;height:1px;background:#b9b9b9"></div>
<div class="a" style="left:0;top:285px;width:49px;height:1px;background:#fff"></div>
<div class="hh" style="left:7px;top:289px;width:38px"></div>
<div class="a" style="left:0;top:804px;width:49px;height:1px;background:#b9b9b9"></div>
<div class="a" style="left:0;top:805px;width:49px;height:1px;background:#fff"></div>
<div class="hh" style="left:7px;top:808px;width:38px"></div>
<div class="a" style="left:0;top:848px;width:49px;height:1px;background:#b9b9b9"></div>
<div class="a" style="left:0;top:849px;width:49px;height:1px;background:#fff"></div>
<div class="hh" style="left:7px;top:852px;width:38px"></div>
<svg style="left:10px;top:136px" width="24" height="24" viewBox="0 0 24 24"><path d="M3 19Q4 5 16 3" fill="none" stroke="#c4c4c4" stroke-width="1.5"/><rect x="1.5" y="17.5" width="4" height="4" fill="#eee" stroke="#a0a0a0"/><rect x="6" y="7" width="4" height="4" fill="#eee" stroke="#a0a0a0"/><rect x="14" y="1" width="4" height="4" fill="#eee" stroke="#a0a0a0"/><rect x="12" y="13" width="9" height="9" rx="1.5" fill="#b9b9b9"/><path d="M16.5 14.5V20.5M13.5 17.5H19.5M14.3 15.3L18.7 19.7M18.7 15.3L14.3 19.7" stroke="#fff" stroke-width="1.1"/></svg>
<div class="a" style="left:35px;top:146px;width:0;height:0;border-left:5px solid transparent;border-right:5px solid transparent;border-top:5px solid #6a6a6a"></div>
<svg style="left:10px;top:166px" width="24" height="24" viewBox="0 0 24 24"><circle cx="9" cy="10" r="7.5" fill="none" stroke="#c4c4c4" stroke-width="2.5"/><circle cx="15" cy="4" r="1.8" fill="#eee" stroke="#a0a0a0"/><circle cx="4" cy="15" r="1.8" fill="#eee" stroke="#a0a0a0"/><rect x="12" y="13" width="9" height="9" rx="1.5" fill="#b9b9b9"/><path d="M16.5 14.5V20.5M13.5 17.5H19.5M14.3 15.3L18.7 19.7M18.7 15.3L14.3 19.7" stroke="#fff" stroke-width="1.1"/></svg>
<div class="a" style="left:35px;top:176px;width:0;height:0;border-left:5px solid transparent;border-right:5px solid transparent;border-top:5px solid #6a6a6a"></div>
<svg style="left:10px;top:196px" width="24" height="24" viewBox="0 0 24 24"><ellipse cx="10" cy="10" rx="8" ry="5.5" fill="none" stroke="#c4c4c4" stroke-width="2.5" transform="rotate(-20 10 10)"/><circle cx="9" cy="9" r="1.8" fill="#eee" stroke="#a0a0a0"/><rect x="12" y="13" width="9" height="9" rx="1.5" fill="#b9b9b9"/><path d="M16.5 14.5V20.5M13.5 17.5H19.5M14.3 15.3L18.7 19.7M18.7 15.3L14.3 19.7" stroke="#fff" stroke-width="1.1"/></svg>
<div class="a" style="left:35px;top:206px;width:0;height:0;border-left:5px solid transparent;border-right:5px solid transparent;border-top:5px solid #6a6a6a"></div>
<svg style="left:10px;top:226px" width="24" height="24" viewBox="0 0 24 24"><rect x="2" y="3" width="16" height="13" fill="none" stroke="#c4c4c4" stroke-width="2.5"/><rect x="7" y="8" width="4" height="4" fill="#eee" stroke="#a0a0a0"/><rect x="16" y="1" width="4" height="4" fill="#eee" stroke="#a0a0a0"/><rect x="12" y="13" width="9" height="9" rx="1.5" fill="#b9b9b9"/><path d="M16.5 14.5V20.5M13.5 17.5H19.5M14.3 15.3L18.7 19.7M18.7 15.3L14.3 19.7" stroke="#fff" stroke-width="1.1"/></svg>
<div class="a" style="left:35px;top:236px;width:0;height:0;border-left:5px solid transparent;border-right:5px solid transparent;border-top:5px solid #6a6a6a"></div>
<svg style="left:10px;top:256px" width="24" height="24" viewBox="0 0 24 24"><path d="M3 9L10 3L17 6L16 17L6 18Z" fill="none" stroke="#c4c4c4" stroke-width="2.5"/><circle cx="10" cy="3" r="1.8" fill="#eee" stroke="#a0a0a0"/><circle cx="3" cy="9" r="1.8" fill="#eee" stroke="#a0a0a0"/><rect x="12" y="13" width="9" height="9" rx="1.5" fill="#b9b9b9"/><path d="M16.5 14.5V20.5M13.5 17.5H19.5M14.3 15.3L18.7 19.7M18.7 15.3L14.3 19.7" stroke="#fff" stroke-width="1.1"/></svg>
<div class="a" style="left:35px;top:266px;width:0;height:0;border-left:5px solid transparent;border-right:5px solid transparent;border-top:5px solid #6a6a6a"></div>
<svg style="left:12px;top:300px" width="24" height="24" viewBox="0 0 24 24"><path d="M2.5 2.5L20.5 21.5H2.5Z" fill="#cfcfcf" stroke="#777"/><path d="M6.5 13L12 18.5H6.5Z" fill="#f0f0f0" stroke="#777"/><path d="M16 3H21V21" fill="#e6e6e6" stroke="#888"/><path d="M18 6H21M19 9H21M18 12H21M19 15H21" stroke="#888" stroke-width="0.7"/></svg>
<svg style="left:10px;top:330px" width="24" height="24" viewBox="0 0 24 24"><circle cx="11" cy="3" r="2.5" fill="#c8c8c8" stroke="#aaa" stroke-width="0.6"/><circle cx="20" cy="6" r="2.5" fill="#c8c8c8" stroke="#aaa" stroke-width="0.6"/><circle cx="3" cy="11" r="2.5" fill="#c8c8c8" stroke="#aaa" stroke-width="0.6"/><rect x="12" y="13" width="10" height="10" rx="1.5" fill="#808080"/><path d="M14 18H19M17 15.5L19.5 18L17 20.5" stroke="#fff" stroke-width="1.8" fill="none"/></svg>
<svg style="left:12px;top:360px" width="24" height="24" viewBox="0 0 24 24"><path d="M3 6C3 2 9 2 13 4C17 2 22 3 21 8C20 11 16 10 13 12C8 14 3 11 3 6Z" fill="#c5c5c5" stroke="#a5a5a5" stroke-width="0.8"/><rect x="13" y="13" width="10" height="10" rx="1.5" fill="#8a8a8a"/><circle cx="18" cy="18" r="3" fill="none" stroke="#fff" stroke-width="1.5"/></svg>
<svg style="left:12px;top:390px" width="24" height="24" viewBox="0 0 24 24"><circle cx="8" cy="8" r="7" fill="#c8c8c8" stroke="#a8a8a8" stroke-width="0.7"/><path d="M11 10L18 8L23 14L20 21L13 22L9 16Z" fill="#d0d0d0" stroke="#9a9a9a" stroke-width="0.7"/><path d="M8 8L15 15" stroke="#777"/></svg>
<svg style="left:12px;top:420px" width="24" height="24" viewBox="0 0 24 24"><path d="M3 9C3 5 9 5 13 7C17 5 22 6 21 10C20 13 16 12 13 14C8 16 3 13 3 9Z" fill="#d0d0d0" stroke="#a5a5a5"/><ellipse cx="9" cy="9.5" rx="4" ry="2" fill="#eee" stroke="#aaa"/><rect x="13" y="14" width="9" height="9" rx="1.5" fill="#b9b9b9"/><path d="M17.5 15.5V21.5M14.5 18.5H20.5M15.3 16.3L19.7 20.7M19.7 16.3L15.3 20.7" stroke="#fff" stroke-width="1.1"/></svg>
<svg style="left:12px;top:450px" width="24" height="24" viewBox="0 0 24 24"><path d="M3 6C3 2 9 2 13 4C17 2 22 3 21 8C20 11 16 10 13 12C8 14 3 11 3 6Z" fill="#c5c5c5" stroke="#a5a5a5" stroke-width="0.8"/><path d="M3 21C2 17 6 14 9 15C10 18 7 22 3 21Z" fill="#c5c5c5" stroke="#a5a5a5" stroke-width="0.8"/><rect x="13" y="14" width="9" height="9" rx="1.5" fill="#b9b9b9"/><path d="M17.5 15.5V21.5M14.5 18.5H20.5M15.3 16.3L19.7 20.7M19.7 16.3L15.3 20.7" stroke="#fff" stroke-width="1.1"/></svg>
<svg style="left:12px;top:480px" width="24" height="24" viewBox="0 0 24 24"><path d="M3 9C3 5 9 5 13 7C17 5 22 6 21 10C20 13 16 12 13 14C8 16 3 13 3 9Z" fill="#d0d0d0" stroke="#a5a5a5"/><ellipse cx="9" cy="9.5" rx="4" ry="2" fill="#eee" stroke="#aaa"/><rect x="13" y="14" width="9" height="9" rx="1.5" fill="#b9b9b9"/><path d="M17.5 15.5V21.5M14.5 18.5H20.5M15.3 16.3L19.7 20.7M19.7 16.3L15.3 20.7" stroke="#fff" stroke-width="1.1"/></svg>
<svg style="left:12px;top:510px" width="24" height="24" viewBox="0 0 24 24"><path d="M3 9C3 5 9 5 13 7C17 5 22 6 21 10C20 13 16 12 13 14C8 16 3 13 3 9Z" fill="#d0d0d0" stroke="#a5a5a5"/><ellipse cx="9" cy="9.5" rx="4" ry="2" fill="#eee" stroke="#aaa"/><rect x="13" y="14" width="9" height="9" rx="1" fill="#b9b9b9"/><path d="M15 16L20 21M20 16L15 21" stroke="#fff" stroke-width="1.6"/></svg>
<svg style="left:12px;top:540px" width="24" height="24" viewBox="0 0 24 24"><path d="M3 6C3 2 9 2 13 4C17 2 22 3 21 8C20 11 16 10 13 12C8 14 3 11 3 6Z" fill="#c5c5c5" stroke="#a5a5a5" stroke-width="0.8"/><path d="M3 21C2 17 6 14 9 15C10 18 7 22 3 21Z" fill="#c5c5c5" stroke="#a5a5a5" stroke-width="0.8"/><rect x="13" y="14" width="9" height="9" rx="1" fill="#b9b9b9"/><path d="M15 16L20 21M20 16L15 21" stroke="#fff" stroke-width="1.6"/></svg>
<svg style="left:12px;top:569px" width="24" height="24" viewBox="0 0 24 24"><path d="M3 7C3 2 10 2 13 4C17 2 22 3 21 8C20 12 15 11 12 13C10 16 11 22 8 21C4 20 3 14 3 7Z" fill="#c6c6c6" stroke="#a5a5a5" stroke-width="0.8"/></svg>
<svg style="left:12px;top:600px" width="24" height="24" viewBox="0 0 24 24"><path d="M4 17C2 12 10 9 14 5C18 1 23 5 21 10C19 15 14 18 9 21C6 22 5 20 4 17Z" fill="#cbcbcb" stroke="#a5a5a5" stroke-width="0.8"/></svg>
<svg style="left:12px;top:630px" width="24" height="24" viewBox="0 0 24 24"><path d="M3 4C3 1 8 1 10 3L11 12C7 12 3 10 3 4ZM13 3C15 1 21 1 21 4C21 10 17 12 13 12Z" fill="#c6c6c6" stroke="#a5a5a5" stroke-width="0.8"/><path d="M6 19L14 5M16 19L9 5" stroke="#888" stroke-width="1.2"/><circle cx="6" cy="20" r="2.3" fill="none" stroke="#888"/><circle cx="16" cy="20" r="2.3" fill="none" stroke="#888"/></svg>
<svg style="left:12px;top:659px" width="24" height="24" viewBox="0 0 24 24"><path d="M3 4C3 1 8 1 10 3L11 12C7 12 3 10 3 4ZM13 3C15 1 21 1 21 4C21 10 17 12 13 12Z" fill="#c6c6c6" stroke="#a5a5a5" stroke-width="0.8"/><path d="M6 19L14 5M16 19L9 5" stroke="#888" stroke-width="1.2"/><circle cx="6" cy="20" r="2.3" fill="none" stroke="#888"/><circle cx="16" cy="20" r="2.3" fill="none" stroke="#888"/></svg>
<svg style="left:12px;top:688px" width="24" height="24" viewBox="0 0 24 24"><path d="M3 6C3 1 9 1 12 4C15 1 21 1 21 6C21 11 16 11 12 12C9 13 4 12 3 6Z" fill="#c6c6c6" stroke="#a5a5a5" stroke-width="0.8"/><path d="M9 4V11M14 4V11M7 7H17" stroke="#eee"/><path d="M6 12Q6 18 14 22" fill="none" stroke="#888"/></svg>
<svg style="left:12px;top:719px" width="24" height="24" viewBox="0 0 24 24"><path d="M3 3H21V21H3ZM3 9H21M3 15H21M12 3V21" fill="#fff" stroke="#aaa" stroke-width="0.9"/><path d="M9 4V8M15 10V14M9 16V20" stroke="#777"/></svg>
<svg style="left:10px;top:749px" width="24" height="24" viewBox="0 0 24 24"><path d="M11 2L11 22M11 2L20 7L11 11" fill="#c8c8c8" stroke="#999" stroke-width="0.8"/><path d="M6 22L11 14L16 22Z" fill="none" stroke="#bbb"/><path d="M7 6A8 8 0 0 0 5 16" fill="none" stroke="#777"/><path d="M5 5L8 5L7 8" fill="none" stroke="#777"/></svg>
<div class="a" style="left:35px;top:340px;width:0;height:0;border-left:5px solid transparent;border-right:5px solid transparent;border-top:5px solid #6a6a6a"></div>
<div class="a" style="left:35px;top:760px;width:0;height:0;border-left:5px solid transparent;border-right:5px solid transparent;border-top:5px solid #6a6a6a"></div>
<svg style="left:12px;top:817px" width="24" height="24" viewBox="0 0 24 24"><path d="M3 17L7 5L19 3L21 13L12 12Z" fill="#6d9ac9" stroke="#3f6693" stroke-width="0.8"/><circle cx="7" cy="5" r="2" fill="#f5e020" stroke="#444" stroke-width="0.6"/><circle cx="19" cy="3" r="2" fill="#f5e020" stroke="#444" stroke-width="0.6"/><circle cx="3" cy="18" r="2" fill="#f5e020" stroke="#444" stroke-width="0.6"/><circle cx="21" cy="13" r="2" fill="#f5e020" stroke="#444" stroke-width="0.6"/><path d="M12 17L15 21L22 13" fill="none" stroke="#e6d020" stroke-width="2.2"/><path d="M12 17L15 21L22 13" fill="none" stroke="#555" stroke-width="0.6"/></svg>
<svg style="left:10px;top:862px" width="24" height="24" viewBox="0 0 24 24"><circle cx="12" cy="11" r="10" fill="#6d9ac9" stroke="#2f5a8a" stroke-width="0.8"/><path d="M2 11H22M12 1V21M4 5H20M4 17H20" stroke="#dbe8f5" stroke-width="0.9"/><ellipse cx="12" cy="11" rx="5" ry="10" fill="none" stroke="#dbe8f5" stroke-width="0.9"/><path d="M5 7L10 6L9 12L5 11Z M14 5L19 7L18 13L14 12Z" fill="#555" opacity="0.6"/><rect x="14" y="14" width="9" height="9" fill="#3c8a3c"/><path d="M15.5 16L18.5 21L21.5 16Z" fill="#111"/></svg>
<svg style="left:12px;top:892px" width="24" height="24" viewBox="0 0 24 24"><circle cx="12" cy="11" r="10" fill="#6d9ac9" stroke="#2f5a8a" stroke-width="0.8"/><path d="M2 11H22M12 1V21M4 5H20M4 17H20" stroke="#dbe8f5" stroke-width="0.9"/><ellipse cx="12" cy="11" rx="5" ry="10" fill="none" stroke="#dbe8f5" stroke-width="0.9"/><path d="M5 7L10 6L9 12L5 11Z M14 5L19 7L18 13L14 12Z" fill="#555" opacity="0.6"/><rect x="14" y="14" width="9" height="9" fill="#3c8a3c"/><circle cx="18" cy="18" r="2.2" fill="none" stroke="#fff" stroke-width="1.2"/></svg>
<svg style="left:12px;top:922px" width="24" height="24" viewBox="0 0 24 24"><circle cx="12" cy="11" r="10" fill="#6d9ac9" stroke="#2f5a8a" stroke-width="0.8"/><path d="M2 11H22M12 1V21M4 5H20M4 17H20" stroke="#dbe8f5" stroke-width="0.9"/><ellipse cx="12" cy="11" rx="5" ry="10" fill="none" stroke="#dbe8f5" stroke-width="0.9"/><path d="M5 7L10 6L9 12L5 11Z M14 5L19 7L18 13L14 12Z" fill="#555" opacity="0.6"/><circle cx="7" cy="20" r="4" fill="#111"/><circle cx="17" cy="20" r="4" fill="#111"/><circle cx="7" cy="20" r="2" fill="#fff"/><circle cx="17" cy="20" r="2" fill="#fff"/><rect x="8" y="15" width="8" height="4" fill="#111"/></svg>
<div class="a" style="left:50px;top:122px;width:281px;height:25px;background:#d9d9d9;border:1px solid #c2c2c2"></div>
<div class="t" style="left:55px;top:128.5px">Layer</div>
<svg style="left:300px;top:129px" width="12" height="12" viewBox="0 0 12 12"><rect x="0.5" y="4.5" width="7" height="7" fill="none" stroke="#000" stroke-width="1.6"/><path d="M3 4V1H10V8H8" fill="none" stroke="#000" stroke-width="1.6"/></svg>
<svg style="left:316px;top:130px" width="10" height="10" viewBox="0 0 10 10"><path d="M1 1L9 9M9 1L1 9" stroke="#000" stroke-width="1.8"/></svg>
<svg style="left:54.0px;top:153.0px" width="18.0" height="18.0" viewBox="0 0 24 24"><path d="M2 17L8 11L12 15L6 21Z" fill="#e8403a"/><path d="M4 15L9 10L12 13L7 18Z" fill="#f2c42c"/><path d="M6 13L10 9L13 12L9 16Z" fill="#4a88d0"/><path d="M11 12L21 2" stroke="#d4a030" stroke-width="3"/></svg>
<svg style="left:77.0px;top:153.0px" width="18.0" height="18.0" viewBox="0 0 24 24"><rect x="4" y="5" width="13" height="15" fill="#fff" stroke="#888"/><rect x="1.5" y="8" width="13" height="14" fill="none" stroke="#888"/><path d="M8 2H14V10" fill="none" stroke="#888"/><circle cx="17" cy="19" r="4" fill="#5aa05a"/><path d="M17 16.5V21.5M14.5 19H19.5" stroke="#fff" stroke-width="1.5"/></svg>
<svg style="left:100.0px;top:153.0px" width="18.0" height="18.0" viewBox="0 0 24 24"><path d="M1 11C5 4 17 4 21 11C17 17 5 17 1 11Z" fill="#eee" stroke="#888"/><circle cx="11" cy="10" r="4" fill="#4a88d0"/><circle cx="11" cy="10" r="1.5" fill="#111"/><path d="M14 15H23L18.5 20Z" fill="#111"/></svg>
<svg style="left:123.0px;top:153.0px" width="18.0" height="18.0" viewBox="0 0 24 24"><path d="M2 3H22L14 12V22L10 19V12Z" fill="#6d9ac9" stroke="#4a6f9a" stroke-width="0.7"/><rect x="2" y="2" width="20" height="3" fill="#f2d430"/></svg>
<svg style="left:145.0px;top:153.0px" width="18.0" height="18.0" viewBox="0 0 24 24"><path d="M13 3C7 1 3 4 6.5 8C2 9 2 16 8.5 16C10.5 16 12.5 15 13.5 14" fill="none" stroke="#6a1a6a" stroke-width="2.2"/><path d="M11 14H21L20 23H12Z" fill="#aaa" stroke="#888" stroke-width="0.6"/></svg>
<svg style="left:184.0px;top:153.0px" width="18.0" height="18.0" viewBox="0 0 24 24"><path d="M2.5 3V21H6M2.5 8H6M2.5 14H6" fill="none" stroke="#999"/><rect x="5" y="6" width="3" height="3" fill="#f0a030"/><rect x="5" y="12" width="3" height="3" fill="#f0a030"/><rect x="5" y="18" width="3" height="3" fill="#f0a030"/><path d="M12 2H17V14H21L14.5 22L8 14H12Z" fill="#6d9ac9" stroke="#3f6693" stroke-width="0.7"/></svg>
<svg style="left:207.0px;top:153.0px" width="18.0" height="18.0" viewBox="0 0 24 24"><path d="M2.5 3V21H6M2.5 8H6M2.5 14H6" fill="none" stroke="#999"/><rect x="5" y="6" width="3" height="3" fill="#f0a030"/><rect x="5" y="12" width="3" height="3" fill="#f0a030"/><rect x="5" y="18" width="3" height="3" fill="#f0a030"/><path d="M12 22H17V10H21L14.5 2L8 10H12Z" fill="#6d9ac9" stroke="#3f6693" stroke-width="0.7"/></svg>
<svg style="left:230.0px;top:153.0px" width="18.0" height="18.0" viewBox="0 0 24 24"><rect x="2.5" y="2.5" width="16" height="16" fill="#fff" stroke="#777"/><rect x="13" y="15" width="9" height="7" rx="2" fill="#e03030"/><path d="M15 18.5H20" stroke="#fff" stroke-width="1.5"/></svg>
<div class="a" style="left:169px;top:161px;width:0;height:0;border-left:5px solid transparent;border-right:5px solid transparent;border-top:5px solid #111"></div>
<div class="a" style="left:50px;top:175px;width:281px;height:370px;background:#fff;border:1px solid #828790"></div>
<div class="a" style="left:76px;top:200px;width:254px;height:22px;background:#d9d9d9"></div>
<div class="a" style="left:79px;top:180px;width:16px;height:16px;background:#fff;border:1px solid #333"></div>
<div class="a" style="left:79px;top:203px;width:16px;height:16px;background:#fff;border:1px solid #333"></div>
<svg style="left:79px;top:203px" width="16" height="16" viewBox="0 0 16 16"><path d="M3.5 8.5L6.5 11.5L12.5 4.5" fill="none" stroke="#333" stroke-width="1.2"/></svg>
<div class="a" style="left:79px;top:226px;width:16px;height:16px;background:#fff;border:1px solid #333"></div>
<svg style="left:79px;top:226px" width="16" height="16" viewBox="0 0 16 16"><path d="M3.5 8.5L6.5 11.5L12.5 4.5" fill="none" stroke="#333" stroke-width="1.2"/></svg>
<svg style="left:105px;top:182px" width="12" height="12" viewBox="0 0 12 12"><circle cx="6" cy="6" r="5" fill="#ee1111" stroke="#333" stroke-width="0.8"/></svg>
<svg style="left:105px;top:205px" width="12" height="12" viewBox="0 0 12 12"><circle cx="6" cy="6" r="5" fill="#b97c7c" stroke="#555" stroke-width="0.8"/></svg>
<svg style="left:101px;top:224px" width="20" height="20" viewBox="0 0 20 20"><rect x="0" y="0" width="20" height="20" fill="#7aa0d0"/><rect x="0" y="0" width="5" height="5" fill="#1c2a40"/><rect x="10" y="0" width="5" height="5" fill="#1c2a40"/><rect x="5" y="5" width="5" height="5" fill="#1c2a40"/><rect x="10" y="10" width="5" height="5" fill="#1c2a40"/><rect x="0" y="15" width="5" height="5" fill="#1c2a40"/><rect x="15" y="10" width="5" height="10" fill="#fff"/><rect x="15" y="5" width="5" height="5" fill="#7aa0d0"/></svg>
<div class="t" style="left:127px;top:182px;color:#b4b4b4;font-size:13.7px">Punti casuali</div>
<div class="t" style="left:127px;top:205px;font-weight:bold;font-size:12.8px;text-decoration:underline;text-underline-offset:2px">Sampled Points</div>
<div class="t" style="left:127px;top:228px;font-weight:bold;font-size:12.5px">DU000bbaT_L1R</div>
<div class="a" style="left:50px;top:551px;width:281px;height:25px;background:#d9d9d9;border:1px solid #c2c2c2"></div>
<div class="t" style="left:55px;top:557.5px">Browser</div>
<svg style="left:300px;top:558px" width="12" height="12" viewBox="0 0 12 12"><rect x="0.5" y="4.5" width="7" height="7" fill="none" stroke="#000" stroke-width="1.6"/><path d="M3 4V1H10V8H8" fill="none" stroke="#000" stroke-width="1.6"/></svg>
<svg style="left:316px;top:559px" width="10" height="10" viewBox="0 0 10 10"><path d="M1 1L9 9M9 1L1 9" stroke="#000" stroke-width="1.8"/></svg>
<svg style="left:53.0px;top:582.0px" width="18.0" height="18.0" viewBox="0 0 24 24"><rect x="2.5" y="2.5" width="15" height="15" fill="#f4f4f4" stroke="#777"/><circle cx="18" cy="18" r="4" fill="#5aa05a"/><circle cx="18" cy="18" r="2" fill="#ccc"/></svg>
<svg style="left:77.0px;top:582.0px" width="18.0" height="18.0" viewBox="0 0 24 24"><path d="M4 11A8 8 0 0 1 18 6L20 3V11H12L15 8A5 5 0 0 0 7 11Z" fill="#6d9ac9" stroke="#3f6693" stroke-width="0.6"/><path d="M20 13A8 8 0 0 1 6 18L4 21V13H12L9 16A5 5 0 0 0 17 13Z" fill="#6d9ac9" stroke="#3f6693" stroke-width="0.6"/></svg>
<svg style="left:100.0px;top:582.0px" width="18.0" height="18.0" viewBox="0 0 24 24"><path d="M2 3H22L14 12V22L10 19V12Z" fill="#6d9ac9" stroke="#4a6f9a" stroke-width="0.7"/><rect x="2" y="2" width="20" height="3" fill="#f2d430"/></svg>
<svg style="left:123.0px;top:582.0px" width="18.0" height="18.0" viewBox="0 0 24 24"><path d="M2.5 3V21H6M2.5 8H6M2.5 14H6" fill="none" stroke="#999"/><rect x="5" y="6" width="3" height="3" fill="#f0a030"/><rect x="5" y="12" width="3" height="3" fill="#f0a030"/><rect x="5" y="18" width="3" height="3" fill="#f0a030"/><path d="M12 22H17V10H21L14.5 2L8 10H12Z" fill="#6d9ac9" stroke="#3f6693" stroke-width="0.7"/></svg>
<svg style="left:146.0px;top:582.0px" width="18.0" height="18.0" viewBox="0 0 24 24"><circle cx="12" cy="12" r="10" fill="#5a8fd0" stroke="#3a6aa0" stroke-width="0.8"/><text x="9" y="18" font-size="14" font-style="italic" font-weight="bold" fill="#fff" font-family="Liberation Serif">i</text></svg>
<div class="a" style="left:50px;top:604px;width:281px;height:445px;background:#fff;border:1px solid #828790"></div>
<div class="a" style="left:310px;top:605px;width:20px;height:443px;background:#f0f0f0"></div>
<div class="a" style="left:311px;top:626px;width:18px;height:360px;background:#cdcdcd"></div>
<svg style="left:313px;top:612px" width="14" height="10" viewBox="0 0 14 10"><path d="M2 8L7 3L12 8" fill="none" stroke="#555" stroke-width="1.6"/></svg>
<svg style="left:313px;top:1032px" width="14" height="10" viewBox="0 0 14 10"><path d="M2 2L7 7L12 2" fill="none" stroke="#555" stroke-width="1.6"/></svg>

<div class="a" style="left:51px;top:605px;width:259px;height:442px;overflow:hidden">
<svg style="left:8px;top:6px" width="10" height="12"><path d="M2 1L7 6L2 11" fill="none" stroke="#909090" stroke-width="1.6"/></svg>
<svg style="left:28px;top:2px" width="20" height="20" viewBox="0 0 24 24"><path d="M12 1.5L15 9H22.5L16.5 13.5L19 21.5L12 16.5L5 21.5L7.5 13.5L1.5 9H9Z" fill="#edeee6" stroke="#a8ab8a" stroke-width="1"/></svg>
<div class="t" style="left:54px;top:5.5px">Preferiti</div>
<svg style="left:8px;top:30px" width="10" height="12"><path d="M2 1L7 6L2 11" fill="none" stroke="#909090" stroke-width="1.6"/></svg>
<svg style="left:28px;top:26px" width="20" height="20" viewBox="0 0 24 24"><path d="M6 3H14V19H6L5 21V5Z" fill="#f6d36a"/><path d="M5 5L13 3V19L5 21Z" fill="#fbe49a" opacity="0.8"/><path d="M14 5H18V21H6" fill="#f0c85a"/></svg>
<div class="t" style="left:54px;top:29.5px">Home</div>
<svg style="left:8px;top:54px" width="10" height="12"><path d="M2 1L7 6L2 11" fill="none" stroke="#909090" stroke-width="1.6"/></svg>
<svg style="left:28px;top:50px" width="20" height="20" viewBox="0 0 24 24"><path d="M6 3H14V19H6L5 21V5Z" fill="#f6d36a"/><path d="M5 5L13 3V19L5 21Z" fill="#fbe49a" opacity="0.8"/><path d="M14 5H18V21H6" fill="#f0c85a"/></svg>
<div class="t" style="left:54px;top:53.5px">C:&#92;</div>
<svg style="left:8px;top:78px" width="10" height="12"><path d="M2 1L7 6L2 11" fill="none" stroke="#909090" stroke-width="1.6"/></svg>
<svg style="left:28px;top:74px" width="20" height="20" viewBox="0 0 24 24"><path d="M6 3H14V19H6L5 21V5Z" fill="#f6d36a"/><path d="M5 5L13 3V19L5 21Z" fill="#fbe49a" opacity="0.8"/><path d="M14 5H18V21H6" fill="#f0c85a"/></svg>
<div class="t" style="left:54px;top:77.5px">D:&#92;</div>
<svg style="left:8px;top:102px" width="10" height="12"><path d="M2 1L7 6L2 11" fill="none" stroke="#909090" stroke-width="1.6"/></svg>
<svg style="left:28px;top:98px" width="20" height="20" viewBox="0 0 24 24"><path d="M6 3H14V19H6L5 21V5Z" fill="#f6d36a"/><path d="M5 5L13 3V19L5 21Z" fill="#fbe49a" opacity="0.8"/><path d="M14 5H18V21H6" fill="#f0c85a"/></svg>
<div class="t" style="left:54px;top:101.5px">E:&#92;</div>
<svg style="left:8px;top:126px" width="10" height="12"><path d="M2 1L7 6L2 11" fill="none" stroke="#909090" stroke-width="1.6"/></svg>
<svg style="left:28px;top:122px" width="20" height="20" viewBox="0 0 24 24"><path d="M6 3H14V19H6L5 21V5Z" fill="#f6d36a"/><path d="M5 5L13 3V19L5 21Z" fill="#fbe49a" opacity="0.8"/><path d="M14 5H18V21H6" fill="#f0c85a"/></svg>
<div class="t" style="left:54px;top:125.5px">F:&#92;</div>
<svg style="left:8px;top:150px" width="10" height="12"><path d="M2 1L7 6L2 11" fill="none" stroke="#909090" stroke-width="1.6"/></svg>
<svg style="left:28px;top:146px" width="20" height="20" viewBox="0 0 24 24"><circle cx="12" cy="9" r="7.5" fill="#6d9ac9" stroke="#3f6693" stroke-width="0.7"/><path d="M8 5L12 6L10 10L7 9Z M14 4L18 6L16 10L13 8Z" fill="#2d4f78"/><path d="M2 12L12 16V23L2 19Z" fill="#e2b81e" stroke="#333" stroke-width="0.7"/><path d="M12 16L22 12V19L12 23Z" fill="#f8ec70" stroke="#333" stroke-width="0.7"/><path d="M2 12L12 9L22 12L12 16Z" fill="#f3d84a" stroke="#333" stroke-width="0.7" opacity="0.35"/></svg>
<div class="t" style="left:54px;top:149.5px">GeoPackage</div>
<svg style="left:8px;top:174px" width="10" height="12"><path d="M2 1L7 6L2 11" fill="none" stroke="#909090" stroke-width="1.6"/></svg>
<svg style="left:28px;top:170px" width="20" height="20" viewBox="0 0 24 24"><path d="M2 23C5 15 10 6 21 1C19 9 14 16 6 19Z" fill="#8fb3dc" stroke="#3f6693" stroke-width="0.8"/><path d="M3 22L18 4" stroke="#3f6693" stroke-width="0.6"/></svg>
<div class="t" style="left:54px;top:173.5px">SpatiaLite</div>
<svg style="left:8px;top:198px" width="10" height="12"><path d="M2 1L7 6L2 11" fill="none" stroke="#909090" stroke-width="1.6"/></svg>
<svg style="left:28px;top:194px" width="20" height="20" viewBox="0 0 24 24"><path d="M4 3C8 0 16 0 20 3C23 6 22 12 19 14L18 21C17 23 14 22 14 19V15C12 16 9 16 8 15L7 21C6 22 4 21 4 19V13C1 10 1 5 4 3Z" fill="#6d9ac9" stroke="#2f5a8a" stroke-width="0.9"/></svg>
<div class="t" style="left:54px;top:197.5px">PostGIS</div>
<svg style="left:28px;top:218px" width="20" height="20" viewBox="0 0 24 24"><path d="M2 3C8 4 16 6 22 12C16 16 8 19 2 22C5 16 6 9 2 3Z" fill="#6d9ac9" stroke="#2f5a8a" stroke-width="0.9"/></svg>
<div class="t" style="left:54px;top:221.5px">MSSQL</div>
<svg style="left:28px;top:242px" width="20" height="20" viewBox="0 0 24 24"><rect x="2" y="6" width="20" height="13" rx="6" fill="#6d9ac9" stroke="#2f5a8a" stroke-width="1.2"/></svg>
<div class="t" style="left:54px;top:245.5px">Oracle</div>
<svg style="left:28px;top:266px" width="20" height="20" viewBox="0 0 24 24"><rect x="1.5" y="2.5" width="21" height="20" rx="2" fill="#6d9ac9"/><text x="3.5" y="16" font-size="8" fill="#e8f0fa" font-family="Liberation Sans">DB2</text></svg>
<div class="t" style="left:54px;top:269.5px">DB2</div>
<svg style="left:8px;top:294px" width="10" height="12"><path d="M2 1L7 6L2 11" fill="none" stroke="#909090" stroke-width="1.6"/></svg>
<svg style="left:28px;top:290px" width="20" height="20" viewBox="0 0 24 24"><circle cx="12" cy="12" r="10" fill="#6d9ac9" stroke="#2f5a8a" stroke-width="0.8"/><path d="M2 12H22M12 2V22" stroke="#dbe8f5" stroke-width="0.8"/><ellipse cx="12" cy="12" rx="5" ry="10" fill="none" stroke="#dbe8f5" stroke-width="0.8"/><path d="M5 8L10 7L9 13L6 12Z M14 6L19 8L18 14L14 13Z" fill="#333" opacity="0.6"/></svg>
<div class="t" style="left:54px;top:293.5px">WMS/WMTS</div>
<svg style="left:8px;top:318px" width="10" height="12"><path d="M2 1L7 6L2 11" fill="none" stroke="#909090" stroke-width="1.6"/></svg>
<svg style="left:28px;top:314px" width="20" height="20" viewBox="0 0 24 24"><circle cx="12" cy="12" r="10" fill="#6d9ac9" stroke="#2f5a8a" stroke-width="0.8"/><path d="M2 12H22M12 2V22" stroke="#dbe8f5" stroke-width="0.8"/><ellipse cx="12" cy="12" rx="5" ry="10" fill="none" stroke="#dbe8f5" stroke-width="0.8"/><path d="M5 8L10 7L9 13L6 12Z M14 6L19 8L18 14L14 13Z" fill="#333" opacity="0.6"/></svg>
<div class="t" style="left:54px;top:317.5px">XYZ Tiles</div>
<svg style="left:8px;top:342px" width="10" height="12"><path d="M2 1L7 6L2 11" fill="none" stroke="#909090" stroke-width="1.6"/></svg>
<svg style="left:28px;top:338px" width="20" height="20" viewBox="0 0 24 24"><circle cx="12" cy="12" r="10" fill="#4f7fb5" stroke="#1f3a5a" stroke-width="1.2"/><path d="M2 12H22M3 8H21M3 16H21" stroke="#e8f0fa" stroke-width="1.2"/><ellipse cx="12" cy="12" rx="5" ry="10" fill="none" stroke="#e8f0fa" stroke-width="1"/></svg>
<div class="t" style="left:54px;top:341.5px">WCS</div>
<svg style="left:8px;top:366px" width="10" height="12"><path d="M2 1L7 6L2 11" fill="none" stroke="#909090" stroke-width="1.6"/></svg>
<svg style="left:28px;top:362px" width="20" height="20" viewBox="0 0 24 24"><circle cx="12" cy="12" r="10" fill="#e6eef8" stroke="#5a8ac0" stroke-width="1"/><path d="M2 12H22M12 2V22M3 8H21M3 16H21" stroke="#8ab0d8" stroke-width="0.7"/><path d="M6 5L11 20L17 5" fill="none" stroke="#222" stroke-width="1.2"/></svg>
<div class="t" style="left:54px;top:365.5px">WFS</div>
<svg style="left:8px;top:390px" width="10" height="12"><path d="M2 1L7 6L2 11" fill="none" stroke="#909090" stroke-width="1.6"/></svg>
<svg style="left:28px;top:386px" width="20" height="20" viewBox="0 0 24 24"><circle cx="12" cy="12" r="10" fill="#e6eef8" stroke="#5a8ac0" stroke-width="1"/><path d="M2 12H22M12 2V22M3 8H21M3 16H21" stroke="#8ab0d8" stroke-width="0.8"/><ellipse cx="12" cy="12" rx="5" ry="10" fill="none" stroke="#8ab0d8" stroke-width="0.8"/></svg>
<div class="t" style="left:54px;top:389.5px">OWS</div>
<svg style="left:28px;top:410px" width="20" height="20" viewBox="0 0 24 24"><circle cx="12" cy="12" r="10" fill="#6d9ac9" stroke="#2f5a8a" stroke-width="0.8"/><path d="M2 12H22M12 2V22" stroke="#dbe8f5" stroke-width="0.8"/><ellipse cx="12" cy="12" rx="5" ry="10" fill="none" stroke="#dbe8f5" stroke-width="0.8"/><path d="M5 8L10 7L9 13L6 12Z M14 6L19 8L18 14L14 13Z" fill="#333" opacity="0.6"/></svg>
<div class="t" style="left:54px;top:413.5px">ArcGisMapServer</div>
<svg style="left:8px;top:438px" width="10" height="12"><path d="M2 1L7 6L2 11" fill="none" stroke="#909090" stroke-width="1.6"/></svg>
<svg style="left:28px;top:434px" width="20" height="20" viewBox="0 0 24 24"><circle cx="12" cy="12" r="10" fill="#6d9ac9" stroke="#2f5a8a" stroke-width="0.8"/><path d="M2 12H22M12 2V22" stroke="#dbe8f5" stroke-width="0.8"/><ellipse cx="12" cy="12" rx="5" ry="10" fill="none" stroke="#dbe8f5" stroke-width="0.8"/><path d="M5 8L10 7L9 13L6 12Z M14 6L19 8L18 14L14 13Z" fill="#333" opacity="0.6"/></svg>
<div class="t" style="left:54px;top:437.5px">ArcGisFeatureServer</div>
</div>
<div class="a" style="left:336px;top:121px;width:1074px;height:928px;background:#fff;border:1px solid #7f8791"></div>
<svg style="left:337px;top:122px" width="1072" height="926" viewBox="337 122 1072 926">
<defs><filter id="landtex" x="0" y="0" width="100%" height="100%" color-interpolation-filters="sRGB"><feTurbulence type="fractalNoise" baseFrequency="0.07" numOctaves="3" seed="7" result="n"/><feColorMatrix in="n" type="matrix" values="0 0 0 0 0.44  0 0 0 0 0.17  0 0 0 0 0.19  4 0 0 0 -2.2" result="red"/><feComposite in="red" in2="SourceGraphic" operator="in" result="r2"/><feTurbulence type="fractalNoise" baseFrequency="0.8" numOctaves="1" seed="3" result="n2"/><feColorMatrix in="n2" type="matrix" values="0 0 0 0 0.52  0 0 0 0 0.50  0 0 0 0 0.48  4 0 0 0 -2.2" result="g"/><feComposite in="g" in2="SourceGraphic" operator="in" result="g2"/><feTurbulence type="fractalNoise" baseFrequency="0.7" numOctaves="1" seed="9" result="n3"/><feColorMatrix in="n3" type="matrix" values="0 0 0 0 0.22  0 0 0 0 0.17  0 0 0 0 0.17  4 0 0 0 -2.3" result="d"/><feComposite in="d" in2="SourceGraphic" operator="in" result="d2"/><feMerge><feMergeNode in="SourceGraphic"/><feMergeNode in="r2"/><feMergeNode in="g2"/><feMergeNode in="d2"/></feMerge></filter><filter id="sp1" x="-10%" y="-10%" width="120%" height="120%" color-interpolation-filters="sRGB"><feTurbulence type="fractalNoise" baseFrequency="0.55" numOctaves="2" seed="11" result="n"/><feTurbulence type="fractalNoise" baseFrequency="0.05" numOctaves="2" seed="31" result="lo"/><feComposite in="n" in2="lo" operator="arithmetic" k1="0" k2="0.85" k3="0.3" k4="-0.075" result="mix"/><feColorMatrix in="mix" type="matrix" values="0 0 0 0 0.66  0 0 0 0 0.8  0 0 0 0 0.93  10 0 0 0 -5.45" result="c"/><feGaussianBlur in="SourceAlpha" stdDeviation="9" result="m"/><feComposite in="c" in2="m" operator="in"/></filter><filter id="sp2" x="-10%" y="-10%" width="120%" height="120%" color-interpolation-filters="sRGB"><feTurbulence type="fractalNoise" baseFrequency="0.42" numOctaves="2" seed="5" result="n"/><feTurbulence type="fractalNoise" baseFrequency="0.05" numOctaves="2" seed="25" result="lo"/><feComposite in="n" in2="lo" operator="arithmetic" k1="0" k2="0.85" k3="0.3" k4="-0.075" result="mix"/><feColorMatrix in="mix" type="matrix" values="0 0 0 0 0.72  0 0 0 0 0.86  0 0 0 0 0.96  8 0 0 0 -3.76" result="c"/><feGaussianBlur in="SourceAlpha" stdDeviation="6" result="m"/><feComposite in="c" in2="m" operator="in"/></filter><filter id="sp3" x="-10%" y="-10%" width="120%" height="120%" color-interpolation-filters="sRGB"><feTurbulence type="fractalNoise" baseFrequency="0.3" numOctaves="2" seed="2" result="n"/><feTurbulence type="fractalNoise" baseFrequency="0.05" numOctaves="2" seed="22" result="lo"/><feComposite in="n" in2="lo" operator="arithmetic" k1="0" k2="0.85" k3="0.3" k4="-0.075" result="mix"/><feColorMatrix in="mix" type="matrix" values="0 0 0 0 0.8  0 0 0 0 0.91  0 0 0 0 0.98  6 0 0 0 -2.52" result="c"/><feGaussianBlur in="SourceAlpha" stdDeviation="5" result="m"/><feComposite in="c" in2="m" operator="in"/></filter><linearGradient id="swg" x1="0" y1="0" x2="1" y2="0"><stop offset="0" stop-color="#0c111a"/><stop offset="0.5" stop-color="#090d13"/><stop offset="1" stop-color="#080d10"/></linearGradient><filter id="glow" x="-30%" y="-30%" width="160%" height="160%"><feGaussianBlur stdDeviation="5"/></filter><clipPath id="swc"><polygon points="364,505 580,457 880,386 1260,296 1365,667 472,880"/></clipPath></defs>
<polygon points="362,346 500,343 700,335 900,324 1060,312 1200,301 1330,288 1384,826 1275,836 1025,856 665,874 495,879 370,882" fill="#000"/>
<polygon points="364,505 580,457 880,386 1260,296 1365,667 472,880" fill="url(#swg)"/>
<polygon points="637.0,584.0 640.0,565.0 645.0,550.0 660.0,535.0 672.0,527.0 685.0,537.0 693.0,544.0 705.0,530.0 718.0,521.0 735.0,518.0 749.0,517.0 755.0,530.0 775.0,536.0 790.0,542.0 805.0,549.0 820.0,545.0 836.0,538.0 850.0,540.0 869.0,540.0 888.0,540.0 910.0,532.0 930.0,524.0 948.0,514.0 963.0,507.0 978.0,509.0 993.0,509.0 1010.0,503.0 1024.0,497.0 1040.0,490.0 1051.0,486.0 1056.0,490.0 1045.0,510.0 1022.0,547.0 1012.0,565.0 1005.0,588.0 995.0,605.0 993.0,621.0 1001.0,638.0 1013.0,651.0 1024.0,676.0 1026.0,690.0 1005.0,709.0 1001.0,730.0 997.0,747.0 972.0,738.0 942.0,734.0 918.0,730.0 901.0,709.0 880.0,692.0 853.0,685.0 822.0,680.0 800.0,668.0 788.0,659.0 770.0,651.0 755.0,643.0 724.0,628.0 698.0,620.0 672.0,617.0 654.0,607.0 638.0,597.0" fill="#645d57" filter="url(#landtex)"/>
<polygon points="430.0,728.0 444.0,725.0 457.0,716.0 463.0,703.0 476.0,697.0 484.0,707.0 485.0,721.0 490.0,731.0 475.0,752.0 463.0,778.0 450.0,796.0" fill="#5e5b5e" filter="url(#landtex)"/>
<polygon points="1079.0,342.0 1150.0,322.0 1219.0,305.0 1225.0,328.0 1233.0,357.0 1225.0,377.0 1208.0,373.0 1177.0,387.0 1157.0,402.0 1169.0,418.0 1169.0,445.0 1163.0,470.0 1140.0,476.0 1135.0,492.0 1122.0,520.0 1115.0,535.0 1098.0,542.0 1080.0,541.0 1062.0,538.0 1057.0,520.0 1056.0,497.0 1068.0,485.0 1080.0,470.0 1078.0,440.0 1077.0,428.0 1095.0,414.0 1105.0,400.0 1114.0,375.0 1085.0,361.0" fill="#44232a" filter="url(#landtex)"/>
<polygon points="860,545 900,538 948,516 990,510 1040,492 1052,488 1030,530 1010,570 990,575 940,570 880,565" fill="#5a1c22" opacity="0.45"/>
<polygon points="1180,312 1219,305 1225,328 1233,357 1225,377 1208,373 1190,378 1175,350" fill="#4a4342" filter="url(#landtex)" opacity="0.9"/>
<g clip-path="url(#swc)">
<polygon points="368.0,512.0 450.0,492.0 500.0,560.0 470.0,640.0 420.0,640.0 385.0,580.0" fill="#fff" filter="url(#sp1)" opacity="0.7"/>
<polygon points="369.7,514.1 392.2,582.4 422.0,634.3 458.5,682.4 498.1,730.0 559.4,763.8 604.0,763.9 606.0,750.1 570.6,738.2 523.9,702.0 493.5,655.6 456.0,609.7 421.8,565.6 382.3,507.9" fill="#fff" filter="url(#sp2)" opacity="1.0"/>
<polygon points="424.3,614.1 462.7,670.3 499.4,716.2 510.6,707.8 477.3,659.7 435.7,605.9" fill="#fff" filter="url(#sp3)" opacity="0.9"/>
<polygon points="497.7,523.5 523.7,579.8 554.5,631.2 595.1,665.9 633.5,707.3 668.1,752.1 695.6,797.3 704.4,792.7 681.9,743.9 652.5,692.7 614.9,646.1 575.5,612.8 542.3,568.2 506.3,518.5" fill="#fff" filter="url(#sp2)" opacity="0.95"/>
<polygon points="625.0,500.0 720.0,480.0 700.0,520.0 640.0,530.0" fill="#fff" filter="url(#sp1)" opacity="0.6"/>
<polygon points="675.0,700.0 730.0,705.0 725.0,728.0 680.0,725.0" fill="#fff" filter="url(#sp1)" opacity="0.7"/>
<polygon points="560.0,735.0 640.0,738.0 630.0,800.0 580.0,790.0" fill="#fff" filter="url(#sp1)" opacity="0.6"/>
<polygon points="455.0,662.0 540.0,668.0 545.0,730.0 490.0,725.0" fill="#fff" filter="url(#sp1)" opacity="0.7"/>
<polygon points="732.0,470.0 800.0,462.0 832.0,490.0 815.0,517.0 740.0,517.0" fill="#fff" filter="url(#sp1)" opacity="0.5"/>
<polygon points="745.0,468.0 790.0,466.0 792.0,500.0 750.0,502.0" fill="#fff" filter="url(#sp2)" opacity="0.5"/>
<polygon points="884.0,474.0 900.0,471.0 912.0,480.0 908.0,503.0 900.0,522.0 882.0,522.0 872.0,506.0 876.0,488.0" fill="#fff" filter="url(#sp3)" opacity="1.0"/>
<polygon points="857.0,385.0 990.0,375.0 992.0,450.0 870.0,455.0" fill="#fff" filter="url(#sp1)" opacity="0.35"/>
<polygon points="961.0,447.0 1059.0,440.0 1059.0,488.0 965.0,490.0" fill="#fff" filter="url(#sp2)" opacity="0.9"/>
<polygon points="967.0,490.0 1051.0,484.0 1030.0,530.0 975.0,547.0" fill="#fff" filter="url(#sp2)" opacity="0.9"/>
<polygon points="980.0,553.0 1001.0,553.0 1003.0,584.0 982.0,585.0" fill="#fff" filter="url(#sp3)" opacity="1.0"/>
<polygon points="857.0,542.0 940.0,540.0 940.0,561.0 857.0,561.0" fill="#fff" filter="url(#sp1)" opacity="0.6"/>
<polygon points="1082.0,345.0 1160.0,322.0 1190.0,315.0 1185.0,350.0 1150.0,365.0 1110.0,372.0 1085.0,360.0" fill="#fff" filter="url(#sp3)" opacity="0.9"/>
<polygon points="1089.0,377.0 1130.0,372.0 1147.0,385.0 1147.0,406.0 1110.0,408.0 1092.0,395.0" fill="#fff" filter="url(#sp3)" opacity="1.0"/>
<polygon points="1147.0,390.0 1200.0,395.0 1206.0,430.0 1170.0,433.0 1150.0,410.0" fill="#fff" filter="url(#sp2)" opacity="0.9"/>
<polygon points="1080.0,415.0 1160.0,410.0 1165.0,470.0 1120.0,535.0 1075.0,530.0" fill="#fff" filter="url(#sp2)" opacity="0.55"/>
<polygon points="917.0,640.0 995.0,622.0 1026.0,680.0 1005.0,742.0 960.0,738.0 925.0,700.0" fill="#fff" filter="url(#sp2)" opacity="1.0"/>
<polygon points="975.0,650.0 1013.0,651.0 1024.0,690.0 1000.0,730.0 980.0,700.0" fill="#fff" filter="url(#sp3)" opacity="0.7"/>
<polygon points="1123.3,581.6 1132.3,617.2 1135.0,650.9 1131.8,685.3 1117.2,708.8 1132.8,721.2 1158.2,694.7 1161.0,649.1 1147.7,612.8 1132.7,578.4" fill="#fff" filter="url(#sp3)" opacity="1.0"/>
<polygon points="1094.0,592.0 1130.0,592.0 1132.0,646.0 1098.0,640.0" fill="#fff" filter="url(#sp1)" opacity="0.8"/>
<polygon points="1172.0,580.0 1203.0,580.0 1200.0,628.0 1175.0,625.0" fill="#fff" filter="url(#sp1)" opacity="0.8"/>
<polygon points="1192.0,659.0 1261.0,668.0 1258.0,688.0 1195.0,684.0" fill="#fff" filter="url(#sp1)" opacity="0.8"/>
<polygon points="1112.0,530.0 1200.0,520.0 1210.0,580.0 1120.0,590.0" fill="#fff" filter="url(#sp1)" opacity="0.3"/>
<polygon points="700.0,705.0 797.0,709.0 797.0,826.0 700.0,830.0" fill="#fff" filter="url(#sp1)" opacity="0.4"/>
<polygon points="454.0,660.0 540.0,660.0 540.0,734.0 470.0,734.0" fill="#fff" filter="url(#sp1)" opacity="0.5"/>
<polygon points="886.0,484.0 900.0,482.0 903.0,506.0 896.0,516.0 884.0,514.0 880.0,500.0" fill="#cfe2f2" filter="url(#glow)" opacity="0.5"/>
<polygon points="1095.0,382.0 1130.0,377.0 1143.0,390.0 1140.0,402.0 1105.0,404.0" fill="#cfe2f2" filter="url(#glow)" opacity="0.6"/>
<polygon points="983.0,557.0 998.0,557.0 999.0,580.0 985.0,581.0" fill="#cfe2f2" filter="url(#glow)" opacity="0.6"/>
<polygon points="1136.1,626.0 1139.0,655.7 1138.0,684.3 1152.0,685.7 1157.0,654.3 1143.9,624.0" fill="#cfe2f2" filter="url(#glow)" opacity="0.5"/>
<polygon points="1095.0,335.0 1160.0,322.0 1175.0,330.0 1150.0,355.0 1100.0,362.0" fill="#cfe2f2" filter="url(#glow)" opacity="0.3"/>
<polygon points="985.0,660.0 1013.0,655.0 1022.0,690.0 1000.0,725.0" fill="#cfe2f2" filter="url(#glow)" opacity="0.3"/>
<polygon points="416.1,603.1 453.0,655.6 496.1,703.1 503.9,696.9 467.0,644.4 423.9,596.9" fill="#cfe2f2" filter="url(#glow)" opacity="0.25"/>
</g>
<g fill="#e87048" stroke="#353535" stroke-width="0.9"><circle cx="381.8" cy="299.8" r="4.6"/><circle cx="372.1" cy="311.8" r="4.6"/><circle cx="396.8" cy="307.0" r="4.6"/><circle cx="480.6" cy="313.8" r="4.6"/><circle cx="486.8" cy="310.8" r="4.6"/><circle cx="491.7" cy="332.6" r="4.6"/><circle cx="557.8" cy="297.8" r="4.6"/><circle cx="569.9" cy="316.7" r="4.6"/><circle cx="604.5" cy="330.9" r="4.6"/><circle cx="680.7" cy="301.7" r="4.6"/><circle cx="367.8" cy="354.8" r="4.6"/><circle cx="515.0" cy="347.8" r="4.6"/><circle cx="508.8" cy="354.0" r="4.6"/><circle cx="545.8" cy="363.0" r="4.6"/><circle cx="591.9" cy="353.0" r="4.6"/><circle cx="602.0" cy="347.8" r="4.6"/><circle cx="613.8" cy="370.7" r="4.6"/><circle cx="555.9" cy="381.8" r="4.6"/><circle cx="429.9" cy="387.7" r="4.6"/><circle cx="423.6" cy="407.1" r="4.6"/><circle cx="453.8" cy="419.8" r="4.6"/><circle cx="402.6" cy="424.0" r="4.6"/><circle cx="558.8" cy="412.9" r="4.6"/><circle cx="625.5" cy="407.7" r="4.6"/><circle cx="686.8" cy="415.9" r="4.6"/><circle cx="462.9" cy="458.7" r="4.6"/><circle cx="393.9" cy="474.6" r="4.6"/><circle cx="672.6" cy="471.9" r="4.6"/><circle cx="1022.9" cy="287.9" r="4.6"/><circle cx="1033.9" cy="295.7" r="4.6"/><circle cx="1041.9" cy="304.0" r="4.6"/><circle cx="913.0" cy="307.9" r="4.6"/><circle cx="990.8" cy="312.4" r="4.6"/><circle cx="991.7" cy="319.0" r="4.6"/><circle cx="892.0" cy="327.8" r="4.6"/><circle cx="868.8" cy="334.8" r="4.6"/><circle cx="887.7" cy="342.0" r="4.6"/><circle cx="926.6" cy="339.6" r="4.6"/><circle cx="975.8" cy="328.7" r="4.6"/><circle cx="1019.9" cy="344.9" r="4.6"/><circle cx="1043.9" cy="356.9" r="4.6"/><circle cx="855.6" cy="347.8" r="4.6"/><circle cx="823.9" cy="358.9" r="4.6"/><circle cx="844.9" cy="363.0" r="4.6"/><circle cx="901.7" cy="357.9" r="4.6"/><circle cx="927.9" cy="366.7" r="4.6"/><circle cx="897.8" cy="371.7" r="4.6"/><circle cx="854.8" cy="372.7" r="4.6"/><circle cx="865.7" cy="380.9" r="4.6"/><circle cx="724.7" cy="371.5" r="4.6"/><circle cx="728.2" cy="375.0" r="4.6"/><circle cx="711.7" cy="379.9" r="4.6"/><circle cx="757.8" cy="375.0" r="4.6"/><circle cx="794.7" cy="388.6" r="4.6"/><circle cx="814.7" cy="386.7" r="4.6"/><circle cx="761.8" cy="396.8" r="4.6"/><circle cx="964.5" cy="377.9" r="4.6"/><circle cx="945.6" cy="385.7" r="4.6"/><circle cx="923.7" cy="400.9" r="4.6"/><circle cx="880.9" cy="408.7" r="4.6"/><circle cx="937.7" cy="408.7" r="4.6"/><circle cx="990.8" cy="419.8" r="4.6"/><circle cx="867.8" cy="423.6" r="4.6"/><circle cx="954.8" cy="427.9" r="4.6"/><circle cx="756.8" cy="425.6" r="4.6"/><circle cx="840.6" cy="468.0" r="4.6"/><circle cx="753.9" cy="469.7" r="4.6"/><circle cx="702.9" cy="472.9" r="4.6"/><circle cx="976.8" cy="472.9" r="4.6"/><circle cx="1100.8" cy="293.9" r="4.6"/><circle cx="1073.6" cy="323.9" r="4.6"/><circle cx="1188.4" cy="311.8" r="4.6"/><circle cx="1189.9" cy="317.6" r="4.6"/><circle cx="1204.9" cy="310.8" r="4.6"/><circle cx="1351.2" cy="333.8" r="4.6"/><circle cx="1330.7" cy="354.8" r="4.6"/><circle cx="1317.9" cy="360.8" r="4.6"/><circle cx="1251.6" cy="362.4" r="4.6"/><circle cx="1256.0" cy="370.2" r="4.6"/><circle cx="1099.9" cy="363.0" r="4.6"/><circle cx="1161.7" cy="366.7" r="4.6"/><circle cx="1195.8" cy="379.9" r="4.6"/><circle cx="1291.8" cy="399.9" r="4.6"/><circle cx="1210.7" cy="414.9" r="4.6"/><circle cx="1243.8" cy="421.7" r="4.6"/><circle cx="1139.7" cy="414.9" r="4.6"/><circle cx="1190.7" cy="428.9" r="4.6"/><circle cx="1112.9" cy="429.9" r="4.6"/><circle cx="1065.8" cy="462.0" r="4.6"/><circle cx="585.6" cy="482.3" r="4.6"/><circle cx="461.9" cy="498.9" r="4.6"/><circle cx="453.8" cy="511.1" r="4.6"/><circle cx="433.9" cy="519.9" r="4.6"/><circle cx="541.7" cy="494.6" r="4.6"/><circle cx="542.9" cy="502.9" r="4.6"/><circle cx="514.7" cy="523.8" r="4.6"/><circle cx="530.0" cy="535.0" r="4.6"/><circle cx="550.6" cy="546.1" r="4.6"/><circle cx="683.9" cy="522.8" r="4.6"/><circle cx="636.6" cy="542.8" r="4.6"/><circle cx="580.8" cy="565.6" r="4.6"/><circle cx="595.8" cy="563.6" r="4.6"/><circle cx="461.9" cy="589.9" r="4.6"/><circle cx="447.9" cy="603.9" r="4.6"/><circle cx="511.7" cy="600.0" r="4.6"/><circle cx="563.7" cy="595.7" r="4.6"/><circle cx="556.9" cy="607.0" r="4.6"/><circle cx="659.9" cy="600.0" r="4.6"/><circle cx="677.1" cy="616.7" r="4.6"/><circle cx="470.9" cy="623.9" r="4.6"/><circle cx="474.2" cy="627.2" r="4.6"/><circle cx="490.7" cy="622.0" r="4.6"/><circle cx="525.7" cy="622.6" r="4.6"/><circle cx="400.9" cy="628.8" r="4.6"/><circle cx="397.8" cy="634.0" r="4.6"/><circle cx="414.9" cy="634.6" r="4.6"/><circle cx="430.8" cy="638.9" r="4.6"/><circle cx="447.9" cy="635.6" r="4.6"/><circle cx="520.9" cy="639.5" r="4.6"/><circle cx="517.6" cy="647.6" r="4.6"/><circle cx="482.0" cy="651.7" r="4.6"/><circle cx="468.8" cy="664.8" r="4.6"/><circle cx="689.7" cy="632.7" r="4.6"/><circle cx="686.8" cy="645.9" r="4.6"/><circle cx="669.7" cy="658.0" r="4.6"/><circle cx="630.8" cy="674.9" r="4.6"/><circle cx="605.9" cy="685.6" r="4.6"/><circle cx="486.8" cy="687.5" r="4.6"/><circle cx="882.8" cy="481.0" r="4.6"/><circle cx="959.6" cy="491.7" r="4.6"/><circle cx="1002.8" cy="488.8" r="4.6"/><circle cx="799.8" cy="502.8" r="4.6"/><circle cx="867.6" cy="517.9" r="4.6"/><circle cx="889.6" cy="517.0" r="4.6"/><circle cx="918.8" cy="520.8" r="4.6"/><circle cx="979.7" cy="521.8" r="4.6"/><circle cx="836.7" cy="534.8" r="4.6"/><circle cx="847.8" cy="552.0" r="4.6"/><circle cx="968.8" cy="566.9" r="4.6"/><circle cx="1050.7" cy="577.8" r="4.6"/><circle cx="1021.9" cy="589.9" r="4.6"/><circle cx="1035.9" cy="594.7" r="4.6"/><circle cx="747.6" cy="591.8" r="4.6"/><circle cx="715.0" cy="607.0" r="4.6"/><circle cx="737.9" cy="609.7" r="4.6"/><circle cx="739.9" cy="619.6" r="4.6"/><circle cx="735.6" cy="625.9" r="4.6"/><circle cx="758.7" cy="629.2" r="4.6"/><circle cx="849.8" cy="608.8" r="4.6"/><circle cx="845.9" cy="616.7" r="4.6"/><circle cx="842.9" cy="623.3" r="4.6"/><circle cx="867.6" cy="637.0" r="4.6"/><circle cx="948.9" cy="639.9" r="4.6"/><circle cx="922.7" cy="646.7" r="4.6"/><circle cx="895.9" cy="652.7" r="4.6"/><circle cx="835.8" cy="652.7" r="4.6"/><circle cx="996.0" cy="652.7" r="4.6"/><circle cx="1057.5" cy="641.4" r="4.6"/><circle cx="753.9" cy="679.7" r="4.6"/><circle cx="786.0" cy="689.1" r="4.6"/><circle cx="873.5" cy="687.5" r="4.6"/><circle cx="1124.8" cy="484.9" r="4.6"/><circle cx="1131.0" cy="494.0" r="4.6"/><circle cx="1082.9" cy="502.8" r="4.6"/><circle cx="1085.9" cy="510.5" r="4.6"/><circle cx="1202.0" cy="487.8" r="4.6"/><circle cx="1202.0" cy="497.9" r="4.6"/><circle cx="1351.7" cy="519.9" r="4.6"/><circle cx="1179.6" cy="526.7" r="4.6"/><circle cx="1186.0" cy="536.8" r="4.6"/><circle cx="1283.7" cy="540.9" r="4.6"/><circle cx="1316.7" cy="549.6" r="4.6"/><circle cx="1319.6" cy="560.7" r="4.6"/><circle cx="1299.8" cy="562.1" r="4.6"/><circle cx="1344.9" cy="555.9" r="4.6"/><circle cx="1377.0" cy="565.6" r="4.6"/><circle cx="1084.7" cy="552.0" r="4.6"/><circle cx="1063.9" cy="565.6" r="4.6"/><circle cx="1215.6" cy="564.0" r="4.6"/><circle cx="1222.0" cy="582.7" r="4.6"/><circle cx="1102.8" cy="579.8" r="4.6"/><circle cx="1197.1" cy="589.9" r="4.6"/><circle cx="1197.7" cy="596.1" r="4.6"/><circle cx="1209.8" cy="598.6" r="4.6"/><circle cx="1215.0" cy="604.9" r="4.6"/><circle cx="1185.8" cy="608.9" r="4.6"/><circle cx="1377.6" cy="606.8" r="4.6"/><circle cx="1066.8" cy="614.8" r="4.6"/><circle cx="1158.8" cy="617.7" r="4.6"/><circle cx="1362.8" cy="628.8" r="4.6"/><circle cx="1109.6" cy="633.1" r="4.6"/><circle cx="1220.8" cy="637.5" r="4.6"/><circle cx="1244.8" cy="636.0" r="4.6"/><circle cx="1254.5" cy="637.9" r="4.6"/><circle cx="1317.7" cy="635.6" r="4.6"/><circle cx="1321.6" cy="662.8" r="4.6"/><circle cx="1133.9" cy="668.7" r="4.6"/><circle cx="1106.1" cy="677.8" r="4.6"/><circle cx="1085.9" cy="687.1" r="4.6"/><circle cx="414.9" cy="696.8" r="4.6"/><circle cx="506.9" cy="694.9" r="4.6"/><circle cx="518.9" cy="692.9" r="4.6"/><circle cx="507.8" cy="705.9" r="4.6"/><circle cx="482.9" cy="710.8" r="4.6"/><circle cx="435.9" cy="723.1" r="4.6"/><circle cx="580.8" cy="721.7" r="4.6"/><circle cx="694.9" cy="719.8" r="4.6"/><circle cx="377.9" cy="729.9" r="4.6"/><circle cx="377.0" cy="743.9" r="4.6"/><circle cx="424.6" cy="740.0" r="4.6"/><circle cx="457.7" cy="738.6" r="4.6"/><circle cx="482.0" cy="736.1" r="4.6"/><circle cx="405.7" cy="748.7" r="4.6"/><circle cx="399.7" cy="758.1" r="4.6"/><circle cx="415.9" cy="757.7" r="4.6"/><circle cx="413.9" cy="764.9" r="4.6"/><circle cx="419.7" cy="776.9" r="4.6"/><circle cx="441.5" cy="772.1" r="4.6"/><circle cx="495.6" cy="778.9" r="4.6"/><circle cx="462.9" cy="788.8" r="4.6"/><circle cx="514.7" cy="797.9" r="4.6"/><circle cx="657.6" cy="749.9" r="4.6"/><circle cx="648.7" cy="761.0" r="4.6"/><circle cx="611.7" cy="756.1" r="4.6"/><circle cx="673.9" cy="771.7" r="4.6"/><circle cx="644.0" cy="793.1" r="4.6"/><circle cx="649.8" cy="824.8" r="4.6"/><circle cx="533.9" cy="832.9" r="4.6"/><circle cx="581.8" cy="835.9" r="4.6"/><circle cx="366.6" cy="849.9" r="4.6"/><circle cx="366.6" cy="870.9" r="4.6"/><circle cx="365.7" cy="875.2" r="4.6"/><circle cx="425.6" cy="876.1" r="4.6"/><circle cx="512.7" cy="863.7" r="4.6"/><circle cx="527.7" cy="871.8" r="4.6"/><circle cx="562.7" cy="865.6" r="4.6"/><circle cx="919.8" cy="699.7" r="4.6"/><circle cx="972.9" cy="692.9" r="4.6"/><circle cx="1015.1" cy="695.8" r="4.6"/><circle cx="1016.0" cy="708.9" r="4.6"/><circle cx="740.8" cy="704.6" r="4.6"/><circle cx="754.8" cy="709.8" r="4.6"/><circle cx="734.0" cy="718.8" r="4.6"/><circle cx="812.8" cy="718.8" r="4.6"/><circle cx="702.9" cy="727.9" r="4.6"/><circle cx="872.7" cy="703.6" r="4.6"/><circle cx="877.6" cy="711.8" r="4.6"/><circle cx="934.0" cy="730.8" r="4.6"/><circle cx="1042.7" cy="726.6" r="4.6"/><circle cx="1002.8" cy="741.0" r="4.6"/><circle cx="753.9" cy="739.0" r="4.6"/><circle cx="741.4" cy="762.9" r="4.6"/><circle cx="747.6" cy="769.7" r="4.6"/><circle cx="807.9" cy="777.9" r="4.6"/><circle cx="910.6" cy="771.7" r="4.6"/><circle cx="875.6" cy="784.7" r="4.6"/><circle cx="909.7" cy="787.8" r="4.6"/><circle cx="940.8" cy="792.7" r="4.6"/><circle cx="1033.9" cy="779.9" r="4.6"/><circle cx="722.8" cy="800.9" r="4.6"/><circle cx="843.5" cy="808.6" r="4.6"/><circle cx="852.1" cy="810.0" r="4.6"/><circle cx="846.8" cy="823.8" r="4.6"/><circle cx="923.7" cy="814.9" r="4.6"/><circle cx="961.6" cy="818.8" r="4.6"/><circle cx="971.7" cy="832.0" r="4.6"/><circle cx="768.7" cy="838.8" r="4.6"/><circle cx="795.7" cy="852.8" r="4.6"/><circle cx="1038.8" cy="870.9" r="4.6"/><circle cx="1115.0" cy="706.9" r="4.6"/><circle cx="1124.8" cy="716.8" r="4.6"/><circle cx="1228.6" cy="700.7" r="4.6"/><circle cx="1235.0" cy="704.0" r="4.6"/><circle cx="1273.0" cy="701.7" r="4.6"/><circle cx="1215.6" cy="718.8" r="4.6"/><circle cx="1145.6" cy="744.8" r="4.6"/><circle cx="1230.6" cy="751.8" r="4.6"/><circle cx="1308.9" cy="740.0" r="4.6"/><circle cx="1304.7" cy="747.8" r="4.6"/><circle cx="1290.9" cy="752.8" r="4.6"/><circle cx="1297.7" cy="754.8" r="4.6"/><circle cx="1244.8" cy="765.9" r="4.6"/><circle cx="1271.0" cy="771.7" r="4.6"/><circle cx="1316.7" cy="766.8" r="4.6"/><circle cx="1149.9" cy="778.9" r="4.6"/><circle cx="1271.0" cy="811.0" r="4.6"/><circle cx="1152.8" cy="816.8" r="4.6"/><circle cx="1125.7" cy="835.9" r="4.6"/><circle cx="1142.7" cy="852.8" r="4.6"/><circle cx="1181.9" cy="862.7" r="4.6"/><circle cx="1208.8" cy="871.8" r="4.6"/><circle cx="1372.7" cy="854.9" r="4.6"/></g>
<g fill="#ffff00"><circle cx="775.9" cy="528.6" r="5.3"/><circle cx="755.0" cy="541.8" r="5.3"/><circle cx="789.9" cy="553.9" r="5.3"/><circle cx="805.0" cy="561.7" r="5.3"/></g>
</svg>
<div class="a" style="left:1415px;top:122px;width:505px;height:25px;background:#d9d9d9;border:1px solid #c2c2c2"></div>
<div class="t" style="left:1420px;top:128.5px">Sampled Points :: Totale degli elementi: 300, Filtrati: 300, Selezionati: 4</div>
<svg style="left:1889px;top:129px" width="12" height="12" viewBox="0 0 12 12"><rect x="0.5" y="4.5" width="7" height="7" fill="none" stroke="#000" stroke-width="1.6"/><path d="M3 4V1H10V8H8" fill="none" stroke="#000" stroke-width="1.6"/></svg>
<svg style="left:1905px;top:130px" width="10" height="10" viewBox="0 0 10 10"><path d="M1 1L9 9M9 1L1 9" stroke="#000" stroke-width="1.8"/></svg>
<div class="a" style="left:1753px;top:150px;width:23px;height:23px;background:#cce4f7;border:1px solid #99c9ef"></div>
<div class="a" style="left:1776px;top:151px;width:23px;height:22px;background:#dae8f4;border:1px solid #bcd8f0"></div>
<svg style="left:1418.0px;top:152.0px" width="18.0" height="18.0" viewBox="0 0 24 24"><path d="M5 22L7 15L17 2L21 5L11 18Z" fill="#e9d44a" stroke="#8a7a1a" stroke-width="0.8"/><path d="M5 22L7 15L11 18Z" fill="#ccc" stroke="#666" stroke-width="0.6"/><path d="M17 2L21 5L19.5 7L15.5 4Z" fill="#e8e8e8" stroke="#888" stroke-width="0.6"/></svg>
<svg style="left:1442.0px;top:152.0px" width="18.0" height="18.0" viewBox="0 0 24 24"><rect x="1.5" y="2" width="19" height="5" fill="#d6d6d6" stroke="#bbb"/><rect x="1.5" y="9" width="19" height="5" fill="#d6d6d6" stroke="#bbb"/><rect x="1.5" y="16" width="19" height="5" fill="#d6d6d6" stroke="#bbb"/><path d="M8 23L20 3L23 5L11 24Z" fill="#bbb" stroke="#888" stroke-width="0.6"/></svg>
<svg style="left:1465.0px;top:152.0px" width="18.0" height="18.0" viewBox="0 0 24 24"><rect x="1.5" y="1.5" width="19" height="20" rx="2" fill="#c9c9c9" stroke="#a8a8a8"/><rect x="5" y="2.5" width="11" height="7" fill="#e6e6e6"/><rect x="5" y="13" width="9" height="8" fill="#e6e6e6"/><path d="M12 23L21 12L23 14L14 23Z" fill="#bbb" stroke="#999" stroke-width="0.6"/></svg>
<svg style="left:1488.0px;top:152.0px" width="18.0" height="18.0" viewBox="0 0 24 24"><path d="M4 11A8 8 0 0 1 18 6L20 3V11H12L15 8A5 5 0 0 0 7 11Z" fill="#6d9ac9" stroke="#3f6693" stroke-width="0.6"/><path d="M20 13A8 8 0 0 1 6 18L4 21V13H12L9 16A5 5 0 0 0 17 13Z" fill="#6d9ac9" stroke="#3f6693" stroke-width="0.6"/></svg>
<svg style="left:1518.0px;top:152.0px" width="18.0" height="18.0" viewBox="0 0 24 24"><rect x="2" y="4" width="18" height="16" fill="#ddd" stroke="#bbb"/><path d="M2 9H20M2 14H20M8 4V20" stroke="#bbb"/><rect x="13" y="14" width="9" height="9" rx="1.5" fill="#b9b9b9"/><path d="M17.5 15.5V21.5M14.5 18.5H20.5M15.3 16.3L19.7 20.7M19.7 16.3L15.3 20.7" stroke="#fff" stroke-width="1.1"/></svg>
<svg style="left:1541.0px;top:152.0px" width="18.0" height="18.0" viewBox="0 0 24 24"><path d="M3 5H21M9 5V2.5H15V5" stroke="#888" stroke-width="1.6" fill="none"/><path d="M5 6.5L6 22H18L19 6.5" fill="none" stroke="#888" stroke-width="1.8"/><path d="M9.5 9V19M12 9V19M14.5 9V19" stroke="#888" stroke-width="1.3"/></svg>
<svg style="left:1564.0px;top:152.0px" width="18.0" height="18.0" viewBox="0 0 24 24"><path d="M1 7L20 16M1 17L13 11" stroke="#b0b0b0" stroke-width="1.6"/><ellipse cx="20" cy="10" rx="3" ry="3.5" fill="none" stroke="#999" stroke-width="1.5"/><ellipse cx="20" cy="18" rx="3" ry="3.5" fill="none" stroke="#999" stroke-width="1.5"/></svg>
<svg style="left:1587.0px;top:152.0px" width="18.0" height="18.0" viewBox="0 0 24 24"><path d="M9 2.5H16L20.5 7V16.5H9Z" fill="#eee" stroke="#aaa"/><path d="M3.5 7.5H10L14.5 12V22.5H3.5Z" fill="#eee" stroke="#aaa"/></svg>
<svg style="left:1610.0px;top:152.0px" width="18.0" height="18.0" viewBox="0 0 24 24"><rect x="2.5" y="2.5" width="17" height="20" rx="1" fill="#e0e0e0" stroke="#aaa"/><rect x="6" y="1" width="10" height="4" fill="#d0d0d0" stroke="#aaa"/><path d="M6 6.5H15L18 9.5V20.5H6Z" fill="#fff" stroke="#999"/><path d="M8 11H15M8 13.5H15M8 16H15" stroke="#aaa"/></svg>
<svg style="left:1640.0px;top:152.0px" width="18.0" height="18.0" viewBox="0 0 24 24"><rect x="10" y="10" width="12" height="12" fill="#f2d24d" stroke="#b59418"/><path d="M12 3C7 1 3 4 6.5 7.5C2 8.5 2 15 8 15C10 15 12 14 13 13" fill="none" stroke="#6a1a6a" stroke-width="2"/></svg>
<svg style="left:1663.0px;top:152.0px" width="18.0" height="18.0" viewBox="0 0 24 24"><rect x="2" y="2" width="20" height="5" rx="2.5" fill="#f2d24d" stroke="#b59418"/><rect x="2" y="9.5" width="20" height="5" rx="2.5" fill="#f2d24d" stroke="#b59418"/><rect x="2" y="17" width="20" height="5" rx="2.5" fill="#f2d24d" stroke="#b59418"/></svg>
<svg style="left:1686.0px;top:152.0px" width="18.0" height="18.0" viewBox="0 0 24 24"><rect x="2.5" y="2.5" width="19" height="19" fill="#f2d24d" stroke="#777"/><path d="M2.5 2.5L21.5 21.5" stroke="#555"/></svg>
<svg style="left:1709.0px;top:152.0px" width="18.0" height="18.0" viewBox="0 0 24 24"><rect x="1.5" y="1.5" width="15" height="15" fill="#f2d24d" stroke="#b59418"/><circle cx="17.5" cy="17.5" r="5.5" fill="#e02a2a"/><path d="M15 20L20 15" stroke="#fff" stroke-width="1.5"/><circle cx="17.5" cy="17.5" r="3" fill="none" stroke="#fff" stroke-width="1.2"/></svg>
<svg style="left:1732.0px;top:152.0px" width="18.0" height="18.0" viewBox="0 0 24 24"><path d="M2 3H22L14 12V22L10 19V12Z" fill="#6d9ac9" stroke="#4a6f9a" stroke-width="0.7"/><rect x="2" y="2" width="20" height="3" fill="#f2d430"/></svg>
<svg style="left:1755.0px;top:152.0px" width="18.0" height="18.0" viewBox="0 0 24 24"><rect x="1.5" y="1.5" width="21" height="21" fill="#f2d24d" stroke="#b59418"/><path d="M1.5 8H22.5M1.5 14H22.5M1.5 20H22.5" stroke="#6d9ac9"/><path d="M12 4V18M8 8L12 4L16 8" stroke="#3f6693" stroke-width="2" fill="none"/></svg>
<svg style="left:1778.0px;top:152.0px" width="18.0" height="18.0" viewBox="0 0 24 24"><rect x="3" y="4" width="14" height="13" fill="#f2d24d" stroke="#b59418"/><path d="M12 1L15.5 5H8.5ZM12 23L15.5 19H8.5ZM1 12L5 8.5V15.5ZM23 12L19 8.5V15.5Z" fill="#6d9ac9" stroke="#3f6693" stroke-width="0.6"/><path d="M12 5V19M5 12H19" stroke="#6d9ac9" stroke-width="3"/></svg>
<svg style="left:1801.0px;top:152.0px" width="18.0" height="18.0" viewBox="0 0 24 24"><rect x="1.5" y="2.5" width="10" height="12" fill="#f2d24d" stroke="#b59418"/><path d="M3 22L9 16" stroke="#222" stroke-width="3.6" stroke-linecap="round"/><path d="M3.5 21.5L8.5 16.5" stroke="#e9c22e" stroke-width="2.2"/><circle cx="14" cy="9.5" r="8" fill="#f4f1dd" stroke="#6b6b6b" stroke-width="1.2"/></svg>
<svg style="left:1831.0px;top:152.0px" width="18.0" height="18.0" viewBox="0 0 24 24"><rect x="2" y="3" width="16" height="18" fill="#e4e4e4" stroke="#bbb"/><path d="M2 9H18M2 15H18M8 3V21" stroke="#bbb"/><rect x="13" y="14" width="9" height="9" rx="1.5" fill="#b9b9b9"/><path d="M17.5 15.5V21.5M14.5 18.5H20.5M15.3 16.3L19.7 20.7M19.7 16.3L15.3 20.7" stroke="#fff" stroke-width="1.1"/></svg>
<svg style="left:1854.0px;top:152.0px" width="18.0" height="18.0" viewBox="0 0 24 24"><rect x="2" y="3" width="16" height="18" fill="#e4e4e4" stroke="#bbb"/><path d="M2 9H18M2 15H18M8 3V21" stroke="#bbb"/><rect x="13" y="14" width="9" height="9" fill="#bbb"/><path d="M15 16L20 21M20 16L15 21" stroke="#fff"/></svg>
<svg style="left:1877.0px;top:152.0px" width="18.0" height="18.0" viewBox="0 0 24 24"><rect x="2.5" y="2.5" width="20" height="20" fill="none" stroke="#555" stroke-width="1.2"/><path d="M2.5 7.5H22.5M2.5 12.5H22.5M2.5 17.5H22.5" stroke="#888"/><circle cx="7" cy="7.5" r="1.6" fill="#d33"/><circle cx="16" cy="7.5" r="1.6" fill="#d33"/><circle cx="8" cy="12.5" r="1.6" fill="#4a4"/><circle cx="12" cy="12.5" r="1.6" fill="#4a4"/><circle cx="10" cy="17.5" r="1.6" fill="#47c"/><circle cx="14" cy="17.5" r="1.6" fill="#47c"/></svg>
<div class="a" style="left:1512px;top:151px;width:1px;height:20px;background:#d0d0d0"></div>
<div class="a" style="left:1634px;top:151px;width:1px;height:20px;background:#d0d0d0"></div>
<div class="a" style="left:1826px;top:151px;width:1px;height:20px;background:#d0d0d0"></div>
<div class="t" style="left:1904px;top:154px;font-size:15px">»</div>
<div class="a" style="left:1415px;top:175px;width:505px;height:845px;background:#fff;border:1px solid #828790"></div>
<div class="t" style="left:1446px;width:36px;top:183.5px;text-align:center">id</div>
<div class="a" style="left:1446px;top:176px;width:1px;height:28px;background:#e8e8e8"></div>
<div class="t" style="left:1482px;width:125px;top:183.5px;text-align:center">rvalue_1</div>
<div class="a" style="left:1482px;top:176px;width:1px;height:28px;background:#e8e8e8"></div>
<div class="t" style="left:1607px;width:125px;top:183.5px;text-align:center">rvalue_2</div>
<div class="a" style="left:1607px;top:176px;width:1px;height:28px;background:#e8e8e8"></div>
<div class="t" style="left:1732px;width:125px;top:183.5px;text-align:center">rvalue_3</div>
<div class="a" style="left:1732px;top:176px;width:1px;height:28px;background:#e8e8e8"></div>
<div class="a" style="left:1857px;top:176px;width:1px;height:28px;background:#e8e8e8"></div>
<div class="a" style="left:1416px;top:176px;width:483px;height:843px;overflow:hidden">
<div class="a" style="left:30px;top:28px;width:411px;height:37px;background:#3399ff"></div>
<div class="a" style="left:30px;top:64px;width:412px;height:1px;background:#a9cff7"></div>
<div class="a" style="left:66px;top:28px;width:1px;height:37px;background:#a9cff7"></div>
<div class="a" style="left:191px;top:28px;width:1px;height:37px;background:#a9cff7"></div>
<div class="a" style="left:316px;top:28px;width:1px;height:37px;background:#a9cff7"></div>
<div class="a" style="left:441px;top:28px;width:1px;height:37px;background:#a9cff7"></div>
<div class="t" style="left:5px;top:40px">1</div>
<div class="t" style="left:30px;width:32px;top:40.5px;text-align:right;color:#fff;font-size:13px">144</div>
<div class="t" style="left:66px;width:121px;top:40.5px;text-align:right;color:#fff;font-size:13px">9,00000</div>
<div class="t" style="left:191px;width:121px;top:40.5px;text-align:right;color:#fff;font-size:13px">10,00000</div>
<div class="t" style="left:316px;width:121px;top:40.5px;text-align:right;color:#fff;font-size:13px">12,00000</div>
<div class="a" style="left:30px;top:65px;width:411px;height:37px;background:#3399ff"></div>
<div class="a" style="left:30px;top:101px;width:412px;height:1px;background:#a9cff7"></div>
<div class="a" style="left:66px;top:65px;width:1px;height:37px;background:#a9cff7"></div>
<div class="a" style="left:191px;top:65px;width:1px;height:37px;background:#a9cff7"></div>
<div class="a" style="left:316px;top:65px;width:1px;height:37px;background:#a9cff7"></div>
<div class="a" style="left:441px;top:65px;width:1px;height:37px;background:#a9cff7"></div>
<div class="t" style="left:5px;top:77px">2</div>
<div class="t" style="left:30px;width:32px;top:77.5px;text-align:right;color:#fff;font-size:13px">147</div>
<div class="t" style="left:66px;width:121px;top:77.5px;text-align:right;color:#fff;font-size:13px">47,00000</div>
<div class="t" style="left:191px;width:121px;top:77.5px;text-align:right;color:#fff;font-size:13px">28,00000</div>
<div class="t" style="left:316px;width:121px;top:77.5px;text-align:right;color:#fff;font-size:13px">33,00000</div>
<div class="a" style="left:30px;top:102px;width:411px;height:37px;background:#3399ff"></div>
<div class="a" style="left:30px;top:138px;width:412px;height:1px;background:#a9cff7"></div>
<div class="a" style="left:66px;top:102px;width:1px;height:37px;background:#a9cff7"></div>
<div class="a" style="left:191px;top:102px;width:1px;height:37px;background:#a9cff7"></div>
<div class="a" style="left:316px;top:102px;width:1px;height:37px;background:#a9cff7"></div>
<div class="a" style="left:441px;top:102px;width:1px;height:37px;background:#a9cff7"></div>
<div class="t" style="left:5px;top:114px">3</div>
<div class="t" style="left:30px;width:32px;top:114.5px;text-align:right;color:#fff;font-size:13px">232</div>
<div class="t" style="left:66px;width:121px;top:114.5px;text-align:right;color:#fff;font-size:13px">55,00000</div>
<div class="t" style="left:191px;width:121px;top:114.5px;text-align:right;color:#fff;font-size:13px">41,00000</div>
<div class="t" style="left:316px;width:121px;top:114.5px;text-align:right;color:#fff;font-size:13px">39,00000</div>
<div class="a" style="left:30px;top:139px;width:411px;height:37px;background:#3399ff"></div>
<div class="a" style="left:30px;top:175px;width:412px;height:1px;background:#a9cff7"></div>
<div class="a" style="left:66px;top:139px;width:1px;height:37px;background:#a9cff7"></div>
<div class="a" style="left:191px;top:139px;width:1px;height:37px;background:#a9cff7"></div>
<div class="a" style="left:316px;top:139px;width:1px;height:37px;background:#a9cff7"></div>
<div class="a" style="left:441px;top:139px;width:1px;height:37px;background:#a9cff7"></div>
<div class="t" style="left:5px;top:151px">4</div>
<div class="t" style="left:30px;width:32px;top:151.5px;text-align:right;color:#fff;font-size:13px">272</div>
<div class="t" style="left:66px;width:121px;top:151.5px;text-align:right;color:#fff;font-size:13px">86,00000</div>
<div class="t" style="left:191px;width:121px;top:151.5px;text-align:right;color:#fff;font-size:13px">107,00000</div>
<div class="t" style="left:316px;width:121px;top:151.5px;text-align:right;color:#fff;font-size:13px">133,00000</div>
<div class="a" style="left:30px;top:176px;width:411px;height:37px;background:#ffffff"></div>
<div class="a" style="left:30px;top:212px;width:412px;height:1px;background:#d8d8d8"></div>
<div class="a" style="left:66px;top:176px;width:1px;height:37px;background:#d8d8d8"></div>
<div class="a" style="left:191px;top:176px;width:1px;height:37px;background:#d8d8d8"></div>
<div class="a" style="left:316px;top:176px;width:1px;height:37px;background:#d8d8d8"></div>
<div class="a" style="left:441px;top:176px;width:1px;height:37px;background:#d8d8d8"></div>
<div class="t" style="left:5px;top:188px">5</div>
<div class="t" style="left:30px;width:32px;top:188.5px;text-align:right;color:#000;font-size:13px">0</div>
<div class="t" style="left:66px;width:121px;top:188.5px;text-align:right;color:#000;font-size:13px">23,00000</div>
<div class="t" style="left:191px;width:121px;top:188.5px;text-align:right;color:#000;font-size:13px">36,00000</div>
<div class="t" style="left:316px;width:121px;top:188.5px;text-align:right;color:#000;font-size:13px">50,00000</div>
<div class="a" style="left:30px;top:213px;width:411px;height:37px;background:#f4f4f4"></div>
<div class="a" style="left:30px;top:249px;width:412px;height:1px;background:#d8d8d8"></div>
<div class="a" style="left:66px;top:213px;width:1px;height:37px;background:#d8d8d8"></div>
<div class="a" style="left:191px;top:213px;width:1px;height:37px;background:#d8d8d8"></div>
<div class="a" style="left:316px;top:213px;width:1px;height:37px;background:#d8d8d8"></div>
<div class="a" style="left:441px;top:213px;width:1px;height:37px;background:#d8d8d8"></div>
<div class="t" style="left:5px;top:225px">6</div>
<div class="t" style="left:30px;width:32px;top:225.5px;text-align:right;color:#000;font-size:13px">1</div>
<div class="t" style="left:66px;width:121px;top:225.5px;text-align:right;color:#000;font-size:13px">0,00000</div>
<div class="t" style="left:191px;width:121px;top:225.5px;text-align:right;color:#000;font-size:13px">0,00000</div>
<div class="t" style="left:316px;width:121px;top:225.5px;text-align:right;color:#000;font-size:13px">0,00000</div>
<div class="a" style="left:30px;top:250px;width:411px;height:37px;background:#ffffff"></div>
<div class="a" style="left:30px;top:286px;width:412px;height:1px;background:#d8d8d8"></div>
<div class="a" style="left:66px;top:250px;width:1px;height:37px;background:#d8d8d8"></div>
<div class="a" style="left:191px;top:250px;width:1px;height:37px;background:#d8d8d8"></div>
<div class="a" style="left:316px;top:250px;width:1px;height:37px;background:#d8d8d8"></div>
<div class="a" style="left:441px;top:250px;width:1px;height:37px;background:#d8d8d8"></div>
<div class="t" style="left:5px;top:262px">7</div>
<div class="t" style="left:30px;width:32px;top:262.5px;text-align:right;color:#000;font-size:13px">2</div>
<div class="t" style="left:66px;width:121px;top:262.5px;text-align:right;color:#000;font-size:13px">43,00000</div>
<div class="t" style="left:191px;width:121px;top:262.5px;text-align:right;color:#000;font-size:13px">26,00000</div>
<div class="t" style="left:316px;width:121px;top:262.5px;text-align:right;color:#000;font-size:13px">26,00000</div>
<div class="a" style="left:30px;top:287px;width:411px;height:37px;background:#f4f4f4"></div>
<div class="a" style="left:30px;top:323px;width:412px;height:1px;background:#d8d8d8"></div>
<div class="a" style="left:66px;top:287px;width:1px;height:37px;background:#d8d8d8"></div>
<div class="a" style="left:191px;top:287px;width:1px;height:37px;background:#d8d8d8"></div>
<div class="a" style="left:316px;top:287px;width:1px;height:37px;background:#d8d8d8"></div>
<div class="a" style="left:441px;top:287px;width:1px;height:37px;background:#d8d8d8"></div>
<div class="t" style="left:5px;top:299px">8</div>
<div class="t" style="left:30px;width:32px;top:299.5px;text-align:right;color:#000;font-size:13px">3</div>
<div class="t" style="left:66px;width:121px;top:299.5px;text-align:right;color:#000;font-size:13px">10,00000</div>
<div class="t" style="left:191px;width:121px;top:299.5px;text-align:right;color:#000;font-size:13px">14,00000</div>
<div class="t" style="left:316px;width:121px;top:299.5px;text-align:right;color:#000;font-size:13px">22,00000</div>
<div class="a" style="left:30px;top:324px;width:411px;height:37px;background:#ffffff"></div>
<div class="a" style="left:30px;top:360px;width:412px;height:1px;background:#d8d8d8"></div>
<div class="a" style="left:66px;top:324px;width:1px;height:37px;background:#d8d8d8"></div>
<div class="a" style="left:191px;top:324px;width:1px;height:37px;background:#d8d8d8"></div>
<div class="a" style="left:316px;top:324px;width:1px;height:37px;background:#d8d8d8"></div>
<div class="a" style="left:441px;top:324px;width:1px;height:37px;background:#d8d8d8"></div>
<div class="t" style="left:5px;top:336px">9</div>
<div class="t" style="left:30px;width:32px;top:336.5px;text-align:right;color:#000;font-size:13px">4</div>
<div class="t" style="left:66px;width:121px;top:336.5px;text-align:right;color:#000;font-size:13px">10,00000</div>
<div class="t" style="left:191px;width:121px;top:336.5px;text-align:right;color:#000;font-size:13px">15,00000</div>
<div class="t" style="left:316px;width:121px;top:336.5px;text-align:right;color:#000;font-size:13px">16,00000</div>
<div class="a" style="left:30px;top:361px;width:411px;height:37px;background:#f4f4f4"></div>
<div class="a" style="left:30px;top:397px;width:412px;height:1px;background:#d8d8d8"></div>
<div class="a" style="left:66px;top:361px;width:1px;height:37px;background:#d8d8d8"></div>
<div class="a" style="left:191px;top:361px;width:1px;height:37px;background:#d8d8d8"></div>
<div class="a" style="left:316px;top:361px;width:1px;height:37px;background:#d8d8d8"></div>
<div class="a" style="left:441px;top:361px;width:1px;height:37px;background:#d8d8d8"></div>
<div class="t" style="left:5px;top:373px">10</div>
<div class="t" style="left:30px;width:32px;top:373.5px;text-align:right;color:#000;font-size:13px">5</div>
<div class="t" style="left:66px;width:121px;top:373.5px;text-align:right;color:#000;font-size:13px">9,00000</div>
<div class="t" style="left:191px;width:121px;top:373.5px;text-align:right;color:#000;font-size:13px">13,00000</div>
<div class="t" style="left:316px;width:121px;top:373.5px;text-align:right;color:#000;font-size:13px">15,00000</div>
<div class="a" style="left:30px;top:398px;width:411px;height:37px;background:#ffffff"></div>
<div class="a" style="left:30px;top:434px;width:412px;height:1px;background:#d8d8d8"></div>
<div class="a" style="left:66px;top:398px;width:1px;height:37px;background:#d8d8d8"></div>
<div class="a" style="left:191px;top:398px;width:1px;height:37px;background:#d8d8d8"></div>
<div class="a" style="left:316px;top:398px;width:1px;height:37px;background:#d8d8d8"></div>
<div class="a" style="left:441px;top:398px;width:1px;height:37px;background:#d8d8d8"></div>
<div class="t" style="left:5px;top:410px">11</div>
<div class="t" style="left:30px;width:32px;top:410.5px;text-align:right;color:#000;font-size:13px">6</div>
<div class="t" style="left:66px;width:121px;top:410.5px;text-align:right;color:#000;font-size:13px">0,00000</div>
<div class="t" style="left:191px;width:121px;top:410.5px;text-align:right;color:#000;font-size:13px">0,00000</div>
<div class="t" style="left:316px;width:121px;top:410.5px;text-align:right;color:#000;font-size:13px">0,00000</div>
<div class="a" style="left:30px;top:435px;width:411px;height:37px;background:#f4f4f4"></div>
<div class="a" style="left:30px;top:471px;width:412px;height:1px;background:#d8d8d8"></div>
<div class="a" style="left:66px;top:435px;width:1px;height:37px;background:#d8d8d8"></div>
<div class="a" style="left:191px;top:435px;width:1px;height:37px;background:#d8d8d8"></div>
<div class="a" style="left:316px;top:435px;width:1px;height:37px;background:#d8d8d8"></div>
<div class="a" style="left:441px;top:435px;width:1px;height:37px;background:#d8d8d8"></div>
<div class="t" style="left:5px;top:447px">12</div>
<div class="t" style="left:30px;width:32px;top:447.5px;text-align:right;color:#000;font-size:13px">7</div>
<div class="t" style="left:66px;width:121px;top:447.5px;text-align:right;color:#000;font-size:13px">7,00000</div>
<div class="t" style="left:191px;width:121px;top:447.5px;text-align:right;color:#000;font-size:13px">12,00000</div>
<div class="t" style="left:316px;width:121px;top:447.5px;text-align:right;color:#000;font-size:13px">12,00000</div>
<div class="a" style="left:30px;top:472px;width:411px;height:37px;background:#ffffff"></div>
<div class="a" style="left:30px;top:508px;width:412px;height:1px;background:#d8d8d8"></div>
<div class="a" style="left:66px;top:472px;width:1px;height:37px;background:#d8d8d8"></div>
<div class="a" style="left:191px;top:472px;width:1px;height:37px;background:#d8d8d8"></div>
<div class="a" style="left:316px;top:472px;width:1px;height:37px;background:#d8d8d8"></div>
<div class="a" style="left:441px;top:472px;width:1px;height:37px;background:#d8d8d8"></div>
<div class="t" style="left:5px;top:484px">13</div>
<div class="t" style="left:30px;width:32px;top:484.5px;text-align:right;color:#000;font-size:13px">8</div>
<div class="t" style="left:66px;width:121px;top:484.5px;text-align:right;color:#000;font-size:13px">0,00000</div>
<div class="t" style="left:191px;width:121px;top:484.5px;text-align:right;color:#000;font-size:13px">0,00000</div>
<div class="t" style="left:316px;width:121px;top:484.5px;text-align:right;color:#000;font-size:13px">0,00000</div>
<div class="a" style="left:30px;top:509px;width:411px;height:37px;background:#f4f4f4"></div>
<div class="a" style="left:30px;top:545px;width:412px;height:1px;background:#d8d8d8"></div>
<div class="a" style="left:66px;top:509px;width:1px;height:37px;background:#d8d8d8"></div>
<div class="a" style="left:191px;top:509px;width:1px;height:37px;background:#d8d8d8"></div>
<div class="a" style="left:316px;top:509px;width:1px;height:37px;background:#d8d8d8"></div>
<div class="a" style="left:441px;top:509px;width:1px;height:37px;background:#d8d8d8"></div>
<div class="t" style="left:5px;top:521px">14</div>
<div class="t" style="left:30px;width:32px;top:521.5px;text-align:right;color:#000;font-size:13px">9</div>
<div class="t" style="left:66px;width:121px;top:521.5px;text-align:right;color:#000;font-size:13px">0,00000</div>
<div class="t" style="left:191px;width:121px;top:521.5px;text-align:right;color:#000;font-size:13px">0,00000</div>
<div class="t" style="left:316px;width:121px;top:521.5px;text-align:right;color:#000;font-size:13px">0,00000</div>
<div class="a" style="left:30px;top:546px;width:411px;height:37px;background:#ffffff"></div>
<div class="a" style="left:30px;top:582px;width:412px;height:1px;background:#d8d8d8"></div>
<div class="a" style="left:66px;top:546px;width:1px;height:37px;background:#d8d8d8"></div>
<div class="a" style="left:191px;top:546px;width:1px;height:37px;background:#d8d8d8"></div>
<div class="a" style="left:316px;top:546px;width:1px;height:37px;background:#d8d8d8"></div>
<div class="a" style="left:441px;top:546px;width:1px;height:37px;background:#d8d8d8"></div>
<div class="t" style="left:5px;top:558px">15</div>
<div class="t" style="left:30px;width:32px;top:558.5px;text-align:right;color:#000;font-size:13px">10</div>
<div class="t" style="left:66px;width:121px;top:558.5px;text-align:right;color:#000;font-size:13px">7,00000</div>
<div class="t" style="left:191px;width:121px;top:558.5px;text-align:right;color:#000;font-size:13px">10,00000</div>
<div class="t" style="left:316px;width:121px;top:558.5px;text-align:right;color:#000;font-size:13px">10,00000</div>
<div class="a" style="left:30px;top:583px;width:411px;height:37px;background:#f4f4f4"></div>
<div class="a" style="left:30px;top:619px;width:412px;height:1px;background:#d8d8d8"></div>
<div class="a" style="left:66px;top:583px;width:1px;height:37px;background:#d8d8d8"></div>
<div class="a" style="left:191px;top:583px;width:1px;height:37px;background:#d8d8d8"></div>
<div class="a" style="left:316px;top:583px;width:1px;height:37px;background:#d8d8d8"></div>
<div class="a" style="left:441px;top:583px;width:1px;height:37px;background:#d8d8d8"></div>
<div class="t" style="left:5px;top:595px">16</div>
<div class="t" style="left:30px;width:32px;top:595.5px;text-align:right;color:#000;font-size:13px">11</div>
<div class="t" style="left:66px;width:121px;top:595.5px;text-align:right;color:#000;font-size:13px">0,00000</div>
<div class="t" style="left:191px;width:121px;top:595.5px;text-align:right;color:#000;font-size:13px">0,00000</div>
<div class="t" style="left:316px;width:121px;top:595.5px;text-align:right;color:#000;font-size:13px">0,00000</div>
<div class="a" style="left:30px;top:620px;width:411px;height:37px;background:#ffffff"></div>
<div class="a" style="left:30px;top:656px;width:412px;height:1px;background:#d8d8d8"></div>
<div class="a" style="left:66px;top:620px;width:1px;height:37px;background:#d8d8d8"></div>
<div class="a" style="left:191px;top:620px;width:1px;height:37px;background:#d8d8d8"></div>
<div class="a" style="left:316px;top:620px;width:1px;height:37px;background:#d8d8d8"></div>
<div class="a" style="left:441px;top:620px;width:1px;height:37px;background:#d8d8d8"></div>
<div class="t" style="left:5px;top:632px">17</div>
<div class="t" style="left:30px;width:32px;top:632.5px;text-align:right;color:#000;font-size:13px">12</div>
<div class="t" style="left:66px;width:121px;top:632.5px;text-align:right;color:#000;font-size:13px">0,00000</div>
<div class="t" style="left:191px;width:121px;top:632.5px;text-align:right;color:#000;font-size:13px">0,00000</div>
<div class="t" style="left:316px;width:121px;top:632.5px;text-align:right;color:#000;font-size:13px">0,00000</div>
<div class="a" style="left:30px;top:657px;width:411px;height:37px;background:#f4f4f4"></div>
<div class="a" style="left:30px;top:693px;width:412px;height:1px;background:#d8d8d8"></div>
<div class="a" style="left:66px;top:657px;width:1px;height:37px;background:#d8d8d8"></div>
<div class="a" style="left:191px;top:657px;width:1px;height:37px;background:#d8d8d8"></div>
<div class="a" style="left:316px;top:657px;width:1px;height:37px;background:#d8d8d8"></div>
<div class="a" style="left:441px;top:657px;width:1px;height:37px;background:#d8d8d8"></div>
<div class="t" style="left:5px;top:669px">18</div>
<div class="t" style="left:30px;width:32px;top:669.5px;text-align:right;color:#000;font-size:13px">13</div>
<div class="t" style="left:66px;width:121px;top:669.5px;text-align:right;color:#000;font-size:13px">61,00000</div>
<div class="t" style="left:191px;width:121px;top:669.5px;text-align:right;color:#000;font-size:13px">56,00000</div>
<div class="t" style="left:316px;width:121px;top:669.5px;text-align:right;color:#000;font-size:13px">57,00000</div>
<div class="a" style="left:30px;top:694px;width:411px;height:37px;background:#ffffff"></div>
<div class="a" style="left:30px;top:730px;width:412px;height:1px;background:#d8d8d8"></div>
<div class="a" style="left:66px;top:694px;width:1px;height:37px;background:#d8d8d8"></div>
<div class="a" style="left:191px;top:694px;width:1px;height:37px;background:#d8d8d8"></div>
<div class="a" style="left:316px;top:694px;width:1px;height:37px;background:#d8d8d8"></div>
<div class="a" style="left:441px;top:694px;width:1px;height:37px;background:#d8d8d8"></div>
<div class="t" style="left:5px;top:706px">19</div>
<div class="t" style="left:30px;width:32px;top:706.5px;text-align:right;color:#000;font-size:13px">14</div>
<div class="t" style="left:66px;width:121px;top:706.5px;text-align:right;color:#000;font-size:13px">0,00000</div>
<div class="t" style="left:191px;width:121px;top:706.5px;text-align:right;color:#000;font-size:13px">0,00000</div>
<div class="t" style="left:316px;width:121px;top:706.5px;text-align:right;color:#000;font-size:13px">0,00000</div>
<div class="a" style="left:30px;top:731px;width:411px;height:37px;background:#f4f4f4"></div>
<div class="a" style="left:30px;top:767px;width:412px;height:1px;background:#d8d8d8"></div>
<div class="a" style="left:66px;top:731px;width:1px;height:37px;background:#d8d8d8"></div>
<div class="a" style="left:191px;top:731px;width:1px;height:37px;background:#d8d8d8"></div>
<div class="a" style="left:316px;top:731px;width:1px;height:37px;background:#d8d8d8"></div>
<div class="a" style="left:441px;top:731px;width:1px;height:37px;background:#d8d8d8"></div>
<div class="t" style="left:5px;top:743px">20</div>
<div class="t" style="left:30px;width:32px;top:743.5px;text-align:right;color:#000;font-size:13px">15</div>
<div class="t" style="left:66px;width:121px;top:743.5px;text-align:right;color:#000;font-size:13px">0,00000</div>
<div class="t" style="left:191px;width:121px;top:743.5px;text-align:right;color:#000;font-size:13px">0,00000</div>
<div class="t" style="left:316px;width:121px;top:743.5px;text-align:right;color:#000;font-size:13px">0,00000</div>
<div class="a" style="left:30px;top:768px;width:411px;height:37px;background:#ffffff"></div>
<div class="a" style="left:30px;top:804px;width:412px;height:1px;background:#d8d8d8"></div>
<div class="a" style="left:66px;top:768px;width:1px;height:37px;background:#d8d8d8"></div>
<div class="a" style="left:191px;top:768px;width:1px;height:37px;background:#d8d8d8"></div>
<div class="a" style="left:316px;top:768px;width:1px;height:37px;background:#d8d8d8"></div>
<div class="a" style="left:441px;top:768px;width:1px;height:37px;background:#d8d8d8"></div>
<div class="t" style="left:5px;top:780px">21</div>
<div class="t" style="left:30px;width:32px;top:780.5px;text-align:right;color:#000;font-size:13px">16</div>
<div class="t" style="left:66px;width:121px;top:780.5px;text-align:right;color:#000;font-size:13px">9,00000</div>
<div class="t" style="left:191px;width:121px;top:780.5px;text-align:right;color:#000;font-size:13px">10,00000</div>
<div class="t" style="left:316px;width:121px;top:780.5px;text-align:right;color:#000;font-size:13px">14,00000</div>
<div class="a" style="left:30px;top:805px;width:411px;height:37px;background:#f4f4f4"></div>
<div class="a" style="left:30px;top:841px;width:412px;height:1px;background:#d8d8d8"></div>
<div class="a" style="left:66px;top:805px;width:1px;height:37px;background:#d8d8d8"></div>
<div class="a" style="left:191px;top:805px;width:1px;height:37px;background:#d8d8d8"></div>
<div class="a" style="left:316px;top:805px;width:1px;height:37px;background:#d8d8d8"></div>
<div class="a" style="left:441px;top:805px;width:1px;height:37px;background:#d8d8d8"></div>
<div class="t" style="left:5px;top:817px">22</div>
<div class="t" style="left:30px;width:32px;top:817.5px;text-align:right;color:#000;font-size:13px">17</div>
<div class="t" style="left:66px;width:121px;top:817.5px;text-align:right;color:#000;font-size:13px">11,00000</div>
<div class="t" style="left:191px;width:121px;top:817.5px;text-align:right;color:#000;font-size:13px">14,00000</div>
<div class="t" style="left:316px;width:121px;top:817.5px;text-align:right;color:#000;font-size:13px">21,00000</div>
</div>
<div class="a" style="left:1899px;top:176px;width:20px;height:843px;background:#f0f0f0"></div>
<div class="a" style="left:1900px;top:197px;width:18px;height:57px;background:#cdcdcd"></div>
<svg style="left:1902px;top:183px" width="14" height="10" viewBox="0 0 14 10"><path d="M2 8L7 3L12 8" fill="none" stroke="#555" stroke-width="1.6"/></svg>
<svg style="left:1902px;top:1003px" width="14" height="10" viewBox="0 0 14 10"><path d="M2 2L7 7L12 2" fill="none" stroke="#555" stroke-width="1.6"/></svg>
<div class="a" style="left:1419px;top:1021px;width:184px;height:24px;background:#e1e1e1;border:1px solid #adadad"></div>
<svg style="left:1424.4px;top:1023.4px" width="19.200000000000003" height="19.200000000000003" viewBox="0 0 24 24"><path d="M2 3H22L14 12V23L10 20V12Z" fill="#6d9ac9" stroke="#4a6f9a" stroke-width="0.7"/><rect x="2" y="2" width="20" height="3" fill="#f2d430"/></svg>
<div class="t" style="left:1448px;top:1026px;font-size:14.4px">Mostra tutti gli elementi</div>
<svg style="left:1590px;top:1035px" width="10" height="8" viewBox="0 0 10 8"><path d="M1 1L5 6L9 1Z" fill="#111"/><path d="M5 0V3" stroke="#111"/></svg>
<div class="a" style="left:1864px;top:1021px;width:24px;height:24px;background:#e6e6e6;border:1px solid #c6c6c6"></div>
<svg style="left:1867px;top:1024px" width="18" height="18" viewBox="0 0 18 18"><rect x="5" y="3" width="10" height="5" rx="2" fill="#fff" stroke="#6d9ac9"/><rect x="5" y="10" width="10" height="5" rx="2" fill="#fff" stroke="#6d9ac9"/><path d="M1 5.5H5M1 12.5H5M2 5V13" stroke="#555"/></svg>
<div class="a" style="left:1891px;top:1021px;width:24px;height:24px;background:#cce4f7;border:1px solid #3d8ee0"></div>
<svg style="left:1894px;top:1024px" width="18" height="18" viewBox="0 0 18 18"><rect x="2" y="2" width="14" height="14" fill="#fff" stroke="#6d9ac9"/><rect x="2" y="2" width="14" height="3" fill="#6d9ac9"/><path d="M4 8H14M4 11H14M4 14H14M7 6V16" stroke="#6d9ac9"/></svg>
<div class="a" style="left:0;top:1078px;width:1920px;height:2px;background:#2b2b2b"></div>
<div class="a" style="left:4px;top:1053px;width:275px;height:24px;background:#fff;border:1px solid #7a7a7a"></div>
<svg style="left:12px;top:1058px" width="14" height="14" viewBox="0 0 14 14"><circle cx="6" cy="6" r="4.5" fill="none" stroke="#888" stroke-width="1.4"/><path d="M9.5 9.5L13 13" stroke="#888" stroke-width="1.6"/></svg>
<div class="t" style="left:33px;top:1059px;color:#7a7a7a">Digita per localizzare (Ctrl+K)</div>
<div class="t" style="left:287px;top:1059px;font-size:13.9px">4 elementi selezionati dal layer Sampled Points.</div>
<div class="t" style="left:902px;top:1059px">Coordinate</div>
<div class="a" style="left:974px;top:1053px;width:112px;height:23px;background:#fff;border:1px solid #7a7a7a"></div>
<div class="t" style="left:978px;top:1059px;font-size:12.7px">1099822,3887948</div>
<svg style="left:1088px;top:1054px" width="22" height="22" viewBox="0 0 22 22"><ellipse cx="10" cy="12" rx="6" ry="8" fill="#222" transform="rotate(-20 10 12)"/><ellipse cx="11" cy="15" rx="3.5" ry="3" fill="#fff"/><circle cx="11" cy="15" r="1.2" fill="#222"/><path d="M7 5L9 10" stroke="#fff" stroke-width="1.5"/><path d="M15 3L18 2M16 6L20 5" stroke="#444" stroke-dasharray="1 1"/></svg>
<div class="t" style="left:1121px;top:1059px;font-size:13.2px">Scala</div>
<div class="a" style="left:1156px;top:1053px;width:90px;height:23px;background:#fff;border:1px solid #7a7a7a"></div>
<div class="t" style="left:1161px;top:1059px">1:3331811</div>
<svg style="left:1230px;top:1061px" width="12" height="8" viewBox="0 0 12 8"><path d="M1 1L6 6L11 1" fill="none" stroke="#444" stroke-width="1.1"/></svg>
<svg style="left:1250px;top:1055px" width="18" height="20" viewBox="0 0 18 20"><path d="M4.5 9V6A4.5 4.5 0 0 1 13.5 6V9" fill="none" stroke="#888" stroke-width="2"/><rect x="2" y="9" width="14" height="10" rx="1.5" fill="#8a8a8a"/></svg>
<div class="t" style="left:1282px;top:1059px;font-size:14.2px">Lente d'ingrandimento</div>
<div class="a" style="left:1426px;top:1054px;width:86px;height:22px;background:#fff;border:1px solid #7a7a7a"></div>
<div class="t" style="left:1429px;top:1059px">100%</div>
<div class="a" style="left:1497px;top:1056px;width:13px;height:18px;background:#f0f0f0;border:1px solid #d0d0d0"></div>
<svg style="left:1498px;top:1057px" width="12" height="16" viewBox="0 0 12 16"><path d="M2 7L6 3L10 7Z M2 10L6 14L10 10Z" fill="#111"/></svg>
<div class="t" style="left:1522px;top:1059px">Rotazione</div>
<div class="a" style="left:1593px;top:1054px;width:84px;height:22px;background:#fff;border:1px solid #7a7a7a"></div>
<div class="t" style="left:1596px;top:1059px">0,0 °</div>
<div class="a" style="left:1661px;top:1056px;width:13px;height:18px;background:#f0f0f0;border:1px solid #d0d0d0"></div>
<svg style="left:1662px;top:1057px" width="12" height="16" viewBox="0 0 12 16"><path d="M2 7L6 3L10 7Z M2 10L6 14L10 10Z" fill="#111"/></svg>
<div class="a" style="left:1683px;top:1057px;width:16px;height:16px;background:#fff;border:1px solid #333"></div>
<svg style="left:1683px;top:1057px" width="16" height="16" viewBox="0 0 16 16"><path d="M3.5 8.5L6.5 11.5L12.5 4.5" fill="none" stroke="#333" stroke-width="1.2"/></svg>
<div class="t" style="left:1706px;top:1059px">Visualizza</div>
<svg style="left:1782px;top:1055px" width="20" height="20" viewBox="0 0 20 20"><circle cx="10" cy="10" r="8" fill="none" stroke="#666" stroke-width="1.1"/><ellipse cx="10" cy="10" rx="4" ry="8" fill="none" stroke="#666"/><path d="M2 10H18M3.5 6H16.5M3.5 14H16.5" stroke="#666"/></svg>
<div class="t" style="left:1808px;top:1059px;font-size:12.3px">EPSG:32632</div>
<svg style="left:1892px;top:1055px" width="22" height="20" viewBox="0 0 22 20"><path d="M11 2C17 2 20 5 20 9C20 13 17 16 11 16L8 16L5 19L5.5 15C3 14 2 11.5 2 9C2 5 5 2 11 2Z" fill="#555"/><circle cx="7" cy="9" r="1.4" fill="#fff"/><circle cx="11" cy="9" r="1.4" fill="#fff"/><circle cx="15" cy="9" r="1.4" fill="#fff"/></svg>
</body></html>
